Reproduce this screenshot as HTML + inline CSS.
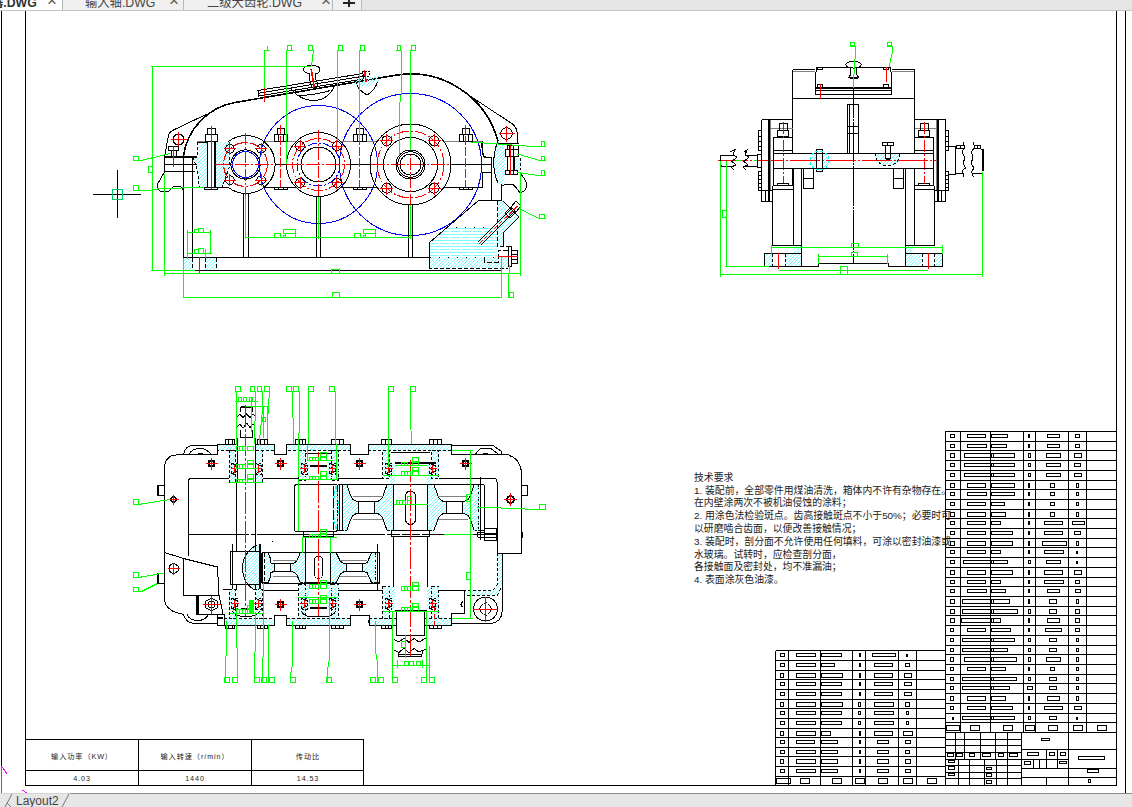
<!DOCTYPE html>
<html lang="zh"><head><meta charset="utf-8"><title>DWG Viewer</title>
<style>
html,body{margin:0;padding:0;background:#fff;overflow:hidden}
body{width:1132px;height:807px;position:relative;font-family:"Liberation Sans","Noto Sans CJK SC",sans-serif}
#tabs{position:absolute;left:0;top:0;width:1132px;height:10px;background:#e6e6e6;border-bottom:1px solid #c4c4c4;overflow:hidden}
.tab{position:absolute;top:0;height:10px;background:#f0f0f0;border-right:1px solid #b8b8b8;overflow:hidden;white-space:nowrap}
.tab span{position:absolute;top:-5px;font-size:12.3px;line-height:16px;color:#444}
.tab span.x{font-size:17px;top:-7px;color:#555}
.tab i{position:absolute;background:#222;display:block}
.tab.act{background:#fff}
.tab.act span.t{font-weight:bold;color:#333}
#bot{position:absolute;left:0;top:793px;width:1132px;height:14px;background:#e6e6e6;overflow:hidden}
#bot .ln{position:absolute;left:70px;top:0;width:1062px;height:1px;background:#8c8c8c}
#bot .ln0{position:absolute;left:0;top:0;width:70px;height:1px;background:#d4d4d4}
#bot .lay{position:absolute;left:16px;top:0px;font-size:12px;line-height:16px;color:#444}
svg{position:absolute;left:0;top:0}
svg text{font-family:"Liberation Sans","Noto Sans CJK SC",sans-serif}
</style></head><body>
<svg width="1132" height="807" viewBox="0 0 1132 807" fill="none" shape-rendering="crispEdges">
<defs>
<pattern id="h45" width="7" height="7" patternUnits="userSpaceOnUse" fill="#7ff"><rect x="0" y="6" width="1" height="1"/><rect x="1" y="5" width="1" height="1"/><rect x="2" y="4" width="1" height="1"/><rect x="3" y="3" width="1" height="1"/><rect x="4" y="2" width="1" height="1"/><rect x="5" y="1" width="1" height="1"/><rect x="6" y="0" width="1" height="1"/><rect x="4" y="6" width="1" height="1"/><rect x="5" y="5" width="1" height="1"/><rect x="6" y="4" width="1" height="1"/><rect x="0" y="3" width="1" height="1"/><rect x="1" y="2" width="1" height="1"/><rect x="2" y="1" width="1" height="1"/><rect x="3" y="0" width="1" height="1"/></pattern>
<pattern id="hoil" width="11" height="6" patternUnits="userSpaceOnUse"><path d="M0 0.5 H11 M0 3.5 H8.5" stroke="#7ff" stroke-width="1" shape-rendering="crispEdges"/></pattern>
</defs>
<g id="part_frame">
<line x1="1.5" y1="10" x2="1.5" y2="793" stroke="#000000"/>
<line x1="25.5" y1="10" x2="25.5" y2="785.5" stroke="#000000"/>
<line x1="1116.5" y1="10" x2="1116.5" y2="785.5" stroke="#000000"/>
<line x1="1125.5" y1="10" x2="1125.5" y2="793" stroke="#000000"/>
<line x1="25" y1="785.5" x2="1117" y2="785.5" stroke="#000000"/>
<line x1="1.5" y1="766" x2="1.5" y2="793" stroke="#ff00ff"/>
<line x1="1.5" y1="766" x2="7" y2="774" stroke="#ff00ff"/>
<line x1="22" y1="790" x2="27" y2="793" stroke="#ff00ff"/>
<line x1="93" y1="194.5" x2="141" y2="194.5" stroke="#000000"/>
<line x1="117.5" y1="170" x2="117.5" y2="218" stroke="#000000"/>
<rect x="112.5" y="189.5" width="10" height="10" stroke="#00cc66" fill="none"/>
<rect x="25.5" y="739.5" width="338.0" height="46.0" stroke="#000000" fill="none"/>
<line x1="25.5" y1="770.5" x2="363.5" y2="770.5" stroke="#000000"/>
<line x1="138.5" y1="739.5" x2="138.5" y2="785.5" stroke="#000000"/>
<line x1="251.5" y1="739.5" x2="251.5" y2="785.5" stroke="#000000"/>
<text x="82" y="758.5" font-size="7.2" text-anchor="middle" fill="#222" letter-spacing="0.9" shape-rendering="auto">输入功率（KW）</text>
<text x="195" y="758.5" font-size="7.2" text-anchor="middle" fill="#222" letter-spacing="0.9" shape-rendering="auto">输入转速（r/min）</text>
<text x="308" y="758.5" font-size="7.2" text-anchor="middle" fill="#222" letter-spacing="0.9" shape-rendering="auto">传动比</text>
<text x="82" y="781" font-size="7.2" text-anchor="middle" fill="#222" letter-spacing="0.9" shape-rendering="auto">4.03</text>
<text x="195" y="781" font-size="7.2" text-anchor="middle" fill="#222" letter-spacing="0.9" shape-rendering="auto">1440</text>
<text x="308" y="781" font-size="7.2" text-anchor="middle" fill="#222" letter-spacing="0.9" shape-rendering="auto">14.53</text>
<text x="694" y="480.9" font-size="9.85" text-anchor="start" fill="#1a1a1a" shape-rendering="auto" id="tq0">技术要求</text>
<text x="694" y="493.67" font-size="9.85" text-anchor="start" fill="#1a1a1a" shape-rendering="auto" id="tq1">1. 装配前，全部零件用煤油清洗，箱体内不许有杂物存在。</text>
<text x="694" y="506.44" font-size="9.85" text-anchor="start" fill="#1a1a1a" shape-rendering="auto" id="tq2">在内壁涂两次不被机油侵蚀的涂料；</text>
<text x="694" y="519.21" font-size="9.85" text-anchor="start" fill="#1a1a1a" shape-rendering="auto" id="tq3">2. 用涂色法检验斑点。齿高接触斑点不小于50%；必要时可</text>
<text x="694" y="531.98" font-size="9.85" text-anchor="start" fill="#1a1a1a" shape-rendering="auto" id="tq4">以研磨啮合齿面，以便改善接触情况；</text>
<text x="694" y="544.75" font-size="9.85" text-anchor="start" fill="#1a1a1a" shape-rendering="auto" id="tq5">3. 装配时，剖分面不允许使用任何填料，可涂以密封油漆或</text>
<text x="694" y="557.52" font-size="9.85" text-anchor="start" fill="#1a1a1a" shape-rendering="auto" id="tq6">水玻璃。试转时，应检查剖分面，</text>
<text x="694" y="570.29" font-size="9.85" text-anchor="start" fill="#1a1a1a" shape-rendering="auto" id="tq7">各接触面及密封处，均不准漏油；</text>
<text x="694" y="583.06" font-size="9.85" text-anchor="start" fill="#1a1a1a" shape-rendering="auto" id="tq8">4. 表面涂灰色油漆。</text>
</g>
<g id="part_front">
<path d="M198.5 141.5 L229 141.5 L229 168 L222 187.5 L200 187.5 C197 180 199 172 196 166 L193 157 L198.5 157 Z" stroke="none" fill="url(#h45)"/>
<rect x="208" y="141.5" width="7" height="46" fill="#fff"/>
<path d="M497.5 141.5 L503 143 L505 150 L505 175 L502 185.5 L498 183 C493 172 492 158 497.5 141.5 Z" stroke="none" fill="url(#h45)"/>
<rect x="515" y="157.5" width="5.5" height="12.5" stroke="none" fill="url(#h45)"/>
<rect x="184" y="258" width="8.5" height="12.5" stroke="none" fill="url(#h45)"/>
<rect x="206" y="258" width="10.5" height="12.5" stroke="none" fill="url(#h45)"/>
<path d="M429.5 257 L429.5 242.5 L447 227.5 L497 227.5 L497 257 Z" stroke="none" fill="url(#hoil)"/>
<path d="M429.5 257 L508 257 L508 268 L429.5 268 Z" stroke="none" fill="url(#h45)"/>
<path d="M497 201 L503 201 L519 217 L503 233 L503 246 L497 246 Z" stroke="none" fill="url(#h45)"/>
<circle cx="318.5" cy="164.5" r="59" stroke="#0000ff" fill="none"/>
<circle cx="410.5" cy="164.5" r="71" stroke="#0000ff" fill="none"/>
<circle cx="245.5" cy="164.5" r="13" stroke="#0000ff" fill="none"/>
<circle cx="318.5" cy="164.5" r="21.5" stroke="#0000ff" fill="none" stroke-dasharray="9 2 2 2"/>
<path d="M183.5 156 A63 63 0 0 1 235 102.5 L395.3 75.3 A90.5 90.5 0 0 1 498 141.5" stroke="#000000" fill="none" stroke-width="1.6"/>
<path d="M207 114 L173.5 130 Q169 132 168.3 136 L165.8 150.5 L164.5 157" stroke="#000000" fill="none"/>
<circle cx="178.5" cy="139.5" r="5.5" stroke="#000000" fill="none"/>
<line x1="170.5" y1="139.5" x2="186.5" y2="139.5" stroke="#ff0000"/>
<line x1="178.5" y1="131.5" x2="178.5" y2="147.5" stroke="#ff0000"/>
<path d="M468.5 95 L512.5 124 Q517.5 128 517.5 136 L518 143.5" stroke="#000000" fill="none"/>
<circle cx="506.5" cy="133.5" r="5.8" stroke="#000000" fill="none"/>
<line x1="498.5" y1="133.5" x2="514.5" y2="133.5" stroke="#ff0000"/>
<line x1="506.5" y1="125.5" x2="506.5" y2="141.5" stroke="#ff0000"/>
<path d="M482 141.5 L482.5 152 Q483 157.5 487 157.5 L492 157.5" stroke="#000000" fill="none" stroke-width="1.6"/>
<path d="M497.5 141.5 C492 158 493 172 498 183" stroke="#000000" fill="none"/>
<line x1="197" y1="141.5" x2="207" y2="141.5" stroke="#808080"/>
<line x1="263" y1="141.5" x2="296" y2="141.5" stroke="#808080"/>
<line x1="341" y1="141.5" x2="377" y2="141.5" stroke="#808080"/>
<line x1="444" y1="141.5" x2="482" y2="141.5" stroke="#808080"/>
<line x1="164.5" y1="164.5" x2="197" y2="164.5" stroke="#000000"/>
<line x1="275" y1="164.5" x2="285.5" y2="164.5" stroke="#000000"/>
<line x1="350" y1="164.5" x2="371" y2="164.5" stroke="#000000"/>
<line x1="452" y1="164.5" x2="492" y2="164.5" stroke="#000000"/>
<line x1="164.5" y1="157" x2="197" y2="157" stroke="#000000" stroke-width="1.6"/>
<line x1="197.5" y1="142" x2="197.5" y2="157" stroke="#000000" stroke-dasharray="3 2"/>
<line x1="197" y1="142" x2="207" y2="142" stroke="#000000"/>
<line x1="164.5" y1="171.5" x2="195" y2="171.5" stroke="#000000"/>
<line x1="164.5" y1="157" x2="164.5" y2="172" stroke="#000000"/>
<line x1="183.5" y1="157" x2="183.5" y2="257.5" stroke="#000000"/>
<line x1="192.5" y1="157" x2="192.5" y2="257.5" stroke="#000000"/>
<path d="M193 157 L196 166 C199 172 197 180 200 187.5" stroke="#000000" fill="none" stroke-dasharray="3 2"/>
<path d="M229 141.5 L229 168 L222 187.5" stroke="#000000" fill="none" stroke-dasharray="3 2"/>
<path d="M164.5 172 L157.5 184 Q156 190 161.5 191.5 L168.5 192 Q171 188 173 187 L179.5 186.5 Q183 187 183.5 192" stroke="#000000" fill="none"/>
<rect x="207.5" y="128" width="8.0" height="6" stroke="#000000" fill="none"/>
<rect x="205.5" y="134" width="12.0" height="7.5" stroke="#000000" fill="none"/>
<line x1="207.5" y1="141.5" x2="207.5" y2="187.5" stroke="#000000" stroke-width="1.6"/>
<line x1="215" y1="141.5" x2="215" y2="187.5" stroke="#000000" stroke-width="1.6"/>
<line x1="211.5" y1="126" x2="211.5" y2="189" stroke="#ff0000"/>
<rect x="204.5" y="187.5" width="13.0" height="2.0" stroke="#000000" fill="none"/>
<rect x="168.5" y="146.5" width="10.0" height="4.0" stroke="#000000" fill="none"/>
<line x1="171" y1="150.5" x2="171" y2="157" stroke="#000000"/>
<line x1="176" y1="150.5" x2="176" y2="157" stroke="#000000"/>
<line x1="173.5" y1="146" x2="173.5" y2="166.5" stroke="#ff0000"/>
<line x1="200" y1="187.5" x2="229" y2="187.5" stroke="#000000"/>
<line x1="263" y1="187.5" x2="296.5" y2="187.5" stroke="#000000"/>
<line x1="340.5" y1="187.5" x2="377" y2="187.5" stroke="#000000"/>
<line x1="444" y1="187.5" x2="482" y2="187.5" stroke="#000000"/>
<rect x="277.0" y="128" width="7.0" height="6" stroke="#000000" fill="none"/>
<rect x="274.0" y="134" width="13.0" height="7.5" stroke="#000000" fill="none"/>
<line x1="278.0" y1="134" x2="278.0" y2="141.5" stroke="#000000"/>
<line x1="283.0" y1="134" x2="283.0" y2="141.5" stroke="#000000"/>
<line x1="280.5" y1="125" x2="280.5" y2="187" stroke="#ff0000" stroke-dasharray="9 2"/>
<rect x="274.0" y="187.5" width="13.0" height="2.0" stroke="#000000" fill="none"/>
<line x1="278.0" y1="187.5" x2="278.0" y2="189.5" stroke="#000000"/>
<line x1="283.0" y1="187.5" x2="283.0" y2="189.5" stroke="#000000"/>
<rect x="356.0" y="128" width="7.0" height="6" stroke="#000000" fill="none"/>
<rect x="353.0" y="134" width="13.0" height="7.5" stroke="#000000" fill="none"/>
<line x1="357.0" y1="134" x2="357.0" y2="141.5" stroke="#000000"/>
<line x1="362.0" y1="134" x2="362.0" y2="141.5" stroke="#000000"/>
<line x1="359.5" y1="125" x2="359.5" y2="187" stroke="#ff0000" stroke-dasharray="9 2"/>
<rect x="353.0" y="187.5" width="13.0" height="2.0" stroke="#000000" fill="none"/>
<line x1="357.0" y1="187.5" x2="357.0" y2="189.5" stroke="#000000"/>
<line x1="362.0" y1="187.5" x2="362.0" y2="189.5" stroke="#000000"/>
<rect x="462.0" y="128" width="7.0" height="6" stroke="#000000" fill="none"/>
<rect x="459.0" y="134" width="13.0" height="7.5" stroke="#000000" fill="none"/>
<line x1="463.0" y1="134" x2="463.0" y2="141.5" stroke="#000000"/>
<line x1="468.0" y1="134" x2="468.0" y2="141.5" stroke="#000000"/>
<line x1="465.5" y1="125" x2="465.5" y2="187" stroke="#ff0000" stroke-dasharray="9 2"/>
<rect x="459.0" y="187.5" width="13.0" height="2.0" stroke="#000000" fill="none"/>
<line x1="463.0" y1="187.5" x2="463.0" y2="189.5" stroke="#000000"/>
<line x1="468.0" y1="187.5" x2="468.0" y2="189.5" stroke="#000000"/>
<path d="M228.5 141.5 A29 29 0 1 1 228.5 187.5" stroke="#000000" fill="none"/>
<circle cx="245.5" cy="164.5" r="22" stroke="#ff0000" fill="none" stroke-dasharray="12 2 2 2"/>
<circle cx="245.5" cy="164.5" r="14.6" stroke="#000000" fill="none"/>
<circle cx="229.9" cy="148.9" r="4.3" stroke="#000000" fill="none"/>
<line x1="224.1" y1="148.9" x2="235.70000000000002" y2="148.9" stroke="#ff0000"/>
<line x1="229.9" y1="143.1" x2="229.9" y2="154.70000000000002" stroke="#ff0000"/>
<circle cx="229.9" cy="180.1" r="4.3" stroke="#000000" fill="none"/>
<line x1="224.1" y1="180.1" x2="235.70000000000002" y2="180.1" stroke="#ff0000"/>
<line x1="229.9" y1="174.29999999999998" x2="229.9" y2="185.9" stroke="#ff0000"/>
<circle cx="261.1" cy="148.9" r="4.3" stroke="#000000" fill="none"/>
<line x1="255.3" y1="148.9" x2="266.90000000000003" y2="148.9" stroke="#ff0000"/>
<line x1="261.1" y1="143.1" x2="261.1" y2="154.70000000000002" stroke="#ff0000"/>
<circle cx="261.1" cy="180.1" r="4.3" stroke="#000000" fill="none"/>
<line x1="255.3" y1="180.1" x2="266.90000000000003" y2="180.1" stroke="#ff0000"/>
<line x1="261.1" y1="174.29999999999998" x2="261.1" y2="185.9" stroke="#ff0000"/>
<circle cx="318.5" cy="164.5" r="32" stroke="#000000" fill="none"/>
<circle cx="318.5" cy="164.5" r="26" stroke="#ff0000" fill="none" stroke-dasharray="12 2 2 2"/>
<circle cx="318.5" cy="164.5" r="17.5" stroke="#000000" fill="none"/>
<circle cx="300.1" cy="146.1" r="4.5" stroke="#000000" fill="none"/>
<line x1="294.1" y1="146.1" x2="306.1" y2="146.1" stroke="#ff0000"/>
<line x1="300.1" y1="140.1" x2="300.1" y2="152.1" stroke="#ff0000"/>
<circle cx="300.1" cy="182.9" r="4.5" stroke="#000000" fill="none"/>
<line x1="294.1" y1="182.9" x2="306.1" y2="182.9" stroke="#ff0000"/>
<line x1="300.1" y1="176.9" x2="300.1" y2="188.9" stroke="#ff0000"/>
<circle cx="336.9" cy="146.1" r="4.5" stroke="#000000" fill="none"/>
<line x1="330.9" y1="146.1" x2="342.9" y2="146.1" stroke="#ff0000"/>
<line x1="336.9" y1="140.1" x2="336.9" y2="152.1" stroke="#ff0000"/>
<circle cx="336.9" cy="182.9" r="4.5" stroke="#000000" fill="none"/>
<line x1="330.9" y1="182.9" x2="342.9" y2="182.9" stroke="#ff0000"/>
<line x1="336.9" y1="176.9" x2="336.9" y2="188.9" stroke="#ff0000"/>
<circle cx="410.5" cy="164.5" r="40.5" stroke="#000000" fill="none"/>
<circle cx="410.5" cy="164.5" r="33.5" stroke="#ff0000" fill="none" stroke-dasharray="12 2 2 2"/>
<circle cx="410.5" cy="164.5" r="27" stroke="#000000" fill="none"/>
<circle cx="386.8" cy="140.8" r="5" stroke="#000000" fill="none"/>
<line x1="380.3" y1="140.8" x2="393.3" y2="140.8" stroke="#ff0000"/>
<line x1="386.8" y1="134.3" x2="386.8" y2="147.3" stroke="#ff0000"/>
<circle cx="386.8" cy="188.2" r="5" stroke="#000000" fill="none"/>
<line x1="380.3" y1="188.2" x2="393.3" y2="188.2" stroke="#ff0000"/>
<line x1="386.8" y1="181.7" x2="386.8" y2="194.7" stroke="#ff0000"/>
<circle cx="434.2" cy="140.8" r="5" stroke="#000000" fill="none"/>
<line x1="427.7" y1="140.8" x2="440.7" y2="140.8" stroke="#ff0000"/>
<line x1="434.2" y1="134.3" x2="434.2" y2="147.3" stroke="#ff0000"/>
<circle cx="434.2" cy="188.2" r="5" stroke="#000000" fill="none"/>
<line x1="427.7" y1="188.2" x2="440.7" y2="188.2" stroke="#ff0000"/>
<line x1="434.2" y1="181.7" x2="434.2" y2="194.7" stroke="#ff0000"/>
<line x1="215" y1="164.5" x2="275" y2="164.5" stroke="#ff0000" stroke-dasharray="14 2 2 2"/>
<line x1="285.5" y1="164.5" x2="350" y2="164.5" stroke="#ff0000" stroke-dasharray="14 2 2 2"/>
<line x1="371" y1="164.5" x2="452" y2="164.5" stroke="#ff0000" stroke-dasharray="14 2 2 2"/>
<line x1="245.5" y1="133" x2="245.5" y2="196" stroke="#ff0000" stroke-dasharray="12 2 2 2"/>
<line x1="318.5" y1="130" x2="318.5" y2="197" stroke="#ff0000" stroke-dasharray="12 2 2 2"/>
<line x1="410.5" y1="122" x2="410.5" y2="206" stroke="#ff0000" stroke-dasharray="12 2 2 2"/>
<circle cx="410.5" cy="164.5" r="14.5" stroke="#000000" fill="none"/>
<circle cx="410.5" cy="164.5" r="12.8" stroke="#000000" fill="none"/>
<circle cx="410.5" cy="164.5" r="10.5" stroke="#000000" fill="none"/>
<line x1="410.5" y1="146" x2="410.5" y2="152" stroke="#000000"/>
<line x1="243.0" y1="193.0" x2="243.0" y2="257.5" stroke="#000000"/>
<line x1="248.0" y1="193.0" x2="248.0" y2="257.5" stroke="#000000"/>
<line x1="316.5" y1="196.0" x2="316.5" y2="257.5" stroke="#000000"/>
<line x1="320.5" y1="196.0" x2="320.5" y2="257.5" stroke="#000000"/>
<line x1="408.5" y1="204.5" x2="408.5" y2="257.5" stroke="#000000"/>
<line x1="412.5" y1="204.5" x2="412.5" y2="257.5" stroke="#000000"/>
<line x1="183.5" y1="257.5" x2="429.5" y2="257.5" stroke="#000000" stroke-width="1.6"/>
<line x1="183.5" y1="270.5" x2="501.5" y2="270.5" stroke="#000000" stroke-width="1.6"/>
<line x1="183.5" y1="257.5" x2="183.5" y2="270.5" stroke="#000000"/>
<line x1="192.5" y1="257.5" x2="192.5" y2="270.5" stroke="#000000" stroke-dasharray="4 2"/>
<line x1="205.5" y1="257.5" x2="205.5" y2="270.5" stroke="#000000" stroke-dasharray="4 2"/>
<line x1="216.5" y1="257.5" x2="216.5" y2="270.5" stroke="#000000" stroke-dasharray="4 2"/>
<line x1="199.5" y1="257" x2="199.5" y2="273" stroke="#ff0000"/>
<line x1="482" y1="172" x2="482" y2="187.5" stroke="#000000"/>
<line x1="482" y1="172" x2="492" y2="172" stroke="#000000"/>
<line x1="491.5" y1="157.5" x2="491.5" y2="200.5" stroke="#000000"/>
<line x1="501.5" y1="184" x2="501.5" y2="200.5" stroke="#000000"/>
<path d="M502 185.5 Q506 184 512.5 184 Q516 187 519.5 192 Q522 193 524.5 190.5 Q527.5 187 526.5 182.5 Q524 178 521 174" stroke="#000000" fill="none"/>
<path d="M429.5 268 L429.5 242.5 L478.5 200.5 L501.5 200.5" stroke="#000000" fill="none"/>
<path d="M429.5 242.5 L429.5 268 L508 268" stroke="#000000" fill="none" stroke-dasharray="4 2"/>
<line x1="447" y1="227.5" x2="497" y2="227.5" stroke="#000000" stroke-dasharray="1 8"/>
<line x1="429.5" y1="257" x2="497" y2="257" stroke="#000000" stroke-dasharray="1 8"/>
<path d="M497 201 L497 246 L508 246" stroke="#000000" fill="none" stroke-dasharray="4 2"/>
<path d="M503 201 L519 217 L503 233 L503 246" stroke="#000000" fill="none"/>
<line x1="479" y1="244" x2="519.5" y2="204" stroke="#ff0000" stroke-dasharray="5 2"/>
<line x1="477.5" y1="242.5" x2="512" y2="208" stroke="#000000"/>
<line x1="480.5" y1="245.5" x2="515" y2="211" stroke="#000000"/>
<path d="M505 213 L511 207 L516 212 L510 218 Z" stroke="#000000" fill="none"/>
<path d="M511 207 L516 201 L521 206 L516 212 Z" stroke="#000000" fill="none"/>
<rect x="508" y="246" width="3.5" height="20.5" stroke="#000000" fill="none"/>
<rect x="511.5" y="250" width="6.0" height="13" stroke="#000000" fill="none"/>
<line x1="511.5" y1="254" x2="517.5" y2="254" stroke="#000000"/>
<line x1="511.5" y1="259" x2="517.5" y2="259" stroke="#000000"/>
<path d="M508 250 L498 250 L498 262 L484 262 L484 257" stroke="#000000" fill="none" stroke-dasharray="5 2"/>
<line x1="498" y1="256.5" x2="518" y2="256.5" stroke="#ff0000"/>
<rect x="507" y="145" width="11.5" height="4" stroke="#000000" fill="none"/>
<rect x="505" y="149" width="13.5" height="7.5" stroke="#000000" fill="none"/>
<line x1="509.5" y1="145" x2="509.5" y2="156.5" stroke="#000000"/>
<line x1="513" y1="145" x2="513" y2="156.5" stroke="#000000"/>
<line x1="507.5" y1="156.5" x2="507.5" y2="170.5" stroke="#000000" stroke-width="1.6"/>
<line x1="514" y1="156.5" x2="514" y2="170.5" stroke="#000000" stroke-width="1.6"/>
<rect x="505" y="170.5" width="12" height="3.5" stroke="#000000" fill="none"/>
<line x1="509" y1="170.5" x2="509" y2="174" stroke="#000000"/>
<line x1="513" y1="170.5" x2="513" y2="174" stroke="#000000"/>
<line x1="510.5" y1="144" x2="510.5" y2="175" stroke="#ff0000"/>
<line x1="498" y1="143.5" x2="518.5" y2="143.5" stroke="#000000"/>
<line x1="520.5" y1="157.5" x2="520.5" y2="170" stroke="#000000" stroke-dasharray="3 2"/>
<path d="M258 90.5 L363 73.5 L363.5 79 L258.5 96 Z" stroke="#000000" fill="none"/>
<line x1="258.5" y1="93.2" x2="363.5" y2="76.2" stroke="#000000"/>
<path d="M291 88.5 Q296 96 306 99.5 Q315 101.5 322 99 Q331 95 335.5 84.5" stroke="#000000" fill="none"/>
<path d="M299.5 95.5 Q315 95 330.5 90.5" stroke="#000000" fill="none"/>
<path d="M303.5 69.5 Q303.5 65.5 311.5 65.5 Q320 65.5 320 69.5 Q320 73 316 73.5 L315.5 79 L317.5 83 L317 87.5 L311.5 88 L311 84 L309.5 80 L309.5 73.5 Q303.5 73 303.5 69.5 Z" stroke="#000000" fill="none"/>
<line x1="311.2" y1="69" x2="314.3" y2="87.5" stroke="#ff0000" stroke-width="1.6"/>
<path d="M356.5 83.5 Q358 90 367 95 Q375 91 377.5 81.5" stroke="#000000" fill="none"/>
<path d="M354 80 L379 75.5 L379 81 L368 86 L356 85 Z" stroke="none" fill="url(#h45)"/>
<rect x="362" y="71" width="7" height="5" stroke="#000000" fill="none" stroke-dasharray="2 1"/>
<line x1="364.4" y1="70.5" x2="366.2" y2="82" stroke="#ff0000" stroke-width="1.6"/>
<line x1="264.5" y1="88" x2="264.5" y2="102" stroke="#ff0000"/>
<line x1="150.5" y1="66.5" x2="311" y2="66.5" stroke="#00ff00"/>
<line x1="152.5" y1="66.5" x2="152.5" y2="270.5" stroke="#00ff00"/>
<line x1="150.5" y1="270.5" x2="195" y2="270.5" stroke="#00ff00"/>
<rect x="148.5" y="166" width="3.5" height="6.5" stroke="#00ff00" fill="none"/>
<line x1="164.5" y1="174" x2="164.5" y2="275.5" stroke="#00ff00"/>
<line x1="164.5" y1="273.5" x2="520.5" y2="273.5" stroke="#00ff00"/>
<line x1="520.5" y1="173" x2="520.5" y2="275.5" stroke="#00ff00"/>
<line x1="183.5" y1="257.5" x2="183.5" y2="298" stroke="#00ff00"/>
<line x1="183.5" y1="297.5" x2="501.5" y2="297.5" stroke="#00ff00"/>
<line x1="501.5" y1="256.5" x2="501.5" y2="298" stroke="#00ff00"/>
<rect x="331.5" y="269.5" width="8.0" height="4.0" stroke="#00ff00" fill="none"/>
<rect x="332.5" y="292.5" width="7.0" height="5.0" stroke="#00ff00" fill="none"/>
<line x1="245.5" y1="196" x2="245.5" y2="238.5" stroke="#00ff00"/>
<line x1="318.5" y1="197" x2="318.5" y2="238.5" stroke="#00ff00"/>
<line x1="410.5" y1="205" x2="410.5" y2="238.5" stroke="#00ff00"/>
<line x1="245.5" y1="237.5" x2="410.5" y2="237.5" stroke="#00ff00"/>
<rect x="274.5" y="233.5" width="6.0" height="4.0" stroke="#00ff00" fill="none"/>
<rect x="283.5" y="229.5" width="12.0" height="4.0" stroke="#00ff00" fill="none"/>
<rect x="285.5" y="233.5" width="10.0" height="4.0" stroke="#00ff00" fill="none"/>
<rect x="283.5" y="235.5" width="2.0" height="2.0" stroke="#00ff00" fill="none"/>
<rect x="354.5" y="233.5" width="6.0" height="4.0" stroke="#00ff00" fill="none"/>
<rect x="363.5" y="229.5" width="12.0" height="4.0" stroke="#00ff00" fill="none"/>
<rect x="365.5" y="233.5" width="10.0" height="4.0" stroke="#00ff00" fill="none"/>
<rect x="363.5" y="235.5" width="2.0" height="2.0" stroke="#00ff00" fill="none"/>
<line x1="187.5" y1="230" x2="187.5" y2="259" stroke="#00ff00"/>
<line x1="210.5" y1="230" x2="210.5" y2="254" stroke="#00ff00"/>
<line x1="187.5" y1="232.5" x2="210.5" y2="232.5" stroke="#00ff00"/>
<line x1="186.5" y1="253.5" x2="212" y2="253.5" stroke="#00ff00"/>
<line x1="205.5" y1="249" x2="205.5" y2="258" stroke="#00ff00"/>
<rect x="194.5" y="229.5" width="4.0" height="3.0" stroke="#00ff00" fill="none"/>
<rect x="198.5" y="228.5" width="5.0" height="4.0" stroke="#00ff00" fill="none"/>
<rect x="194.5" y="249.5" width="4.0" height="4.0" stroke="#00ff00" fill="none"/>
<rect x="198.5" y="248.5" width="5.0" height="5.0" stroke="#00ff00" fill="none"/>
<path d="M264.5 88 L264.5 50.5 L270 50.5" stroke="#00ff00" fill="none"/>
<line x1="267" y1="45.5" x2="267" y2="50.5" stroke="#00ff00"/>
<path d="M286.5 164 L286.5 50.5 L292.5 50.5" stroke="#00ff00" fill="none"/>
<rect x="287.5" y="45.5" width="4" height="5" stroke="#00ff00" fill="none"/>
<path d="M337.5 141 L337.5 50.5 L343.5 50.5" stroke="#00ff00" fill="none"/>
<rect x="338.5" y="45.5" width="4" height="5" stroke="#00ff00" fill="none"/>
<path d="M359.5 141 L359.5 50.5 L365.5 50.5" stroke="#00ff00" fill="none"/>
<rect x="360.5" y="45.5" width="4" height="5" stroke="#00ff00" fill="none"/>
<path d="M311.5 66 L313 54 L313 50.5 L308 50.5" stroke="#00ff00" fill="none"/>
<rect x="308.5" y="45.5" width="4" height="5" stroke="#00ff00" fill="none"/>
<path d="M399.5 155 L400 102 L401.5 92 L401.5 50.5 L396 50.5" stroke="#00ff00" fill="none"/>
<rect x="397" y="45.5" width="3" height="5" stroke="#00ff00" fill="none"/>
<path d="M410.5 150 L410.5 50.5 L416 50.5" stroke="#00ff00" fill="none"/>
<rect x="411.5" y="45.5" width="4" height="5" stroke="#00ff00" fill="none"/>
<rect x="133.5" y="156.5" width="5.0" height="4.0" stroke="#00ff00" fill="none"/>
<path d="M133.5 160.5 L139 161 L170.5 153.5" stroke="#00ff00" fill="none"/>
<rect x="133.5" y="185.5" width="5.0" height="5.0" stroke="#00ff00" fill="none"/>
<path d="M133.5 190.5 L150 190.5 L160 188.5 L204 187.5" stroke="#00ff00" fill="none"/>
<rect x="541.5" y="141.5" width="2.5" height="4.5" stroke="#00ff00" fill="none"/>
<path d="M470.5 142 L533 146.5 L546 146.5" stroke="#00ff00" fill="none"/>
<rect x="541.5" y="156" width="2.5" height="4.5" stroke="#00ff00" fill="none"/>
<path d="M517.5 154 L540 160.5 L546 160.5" stroke="#00ff00" fill="none"/>
<rect x="541.5" y="170.5" width="2.5" height="5.0" stroke="#00ff00" fill="none"/>
<path d="M517.5 172.5 L538 175.5 L546 175.5" stroke="#00ff00" fill="none"/>
<rect x="539.5" y="214.5" width="5.0" height="4.0" stroke="#00ff00" fill="none"/>
<path d="M519 208.5 L539 218.5 L546 218.5" stroke="#00ff00" fill="none"/>
<rect x="509.5" y="292.5" width="4.0" height="4.5" stroke="#00ff00" fill="none"/>
<path d="M509.5 265.5 L508.5 282 L508.5 297 L513.5 297" stroke="#00ff00" fill="none"/>
</g>
<g id="part_side">
<clipPath id="cpin"><circle cx="819.5" cy="160.5" r="9.5"/></clipPath>
<rect x="809" y="150" width="21" height="21.5" stroke="none" fill="url(#h45)" clip-path="url(#cpin)"/>
<rect x="816.5" y="149.5" width="6.0" height="22.0" stroke="none" fill="#fff"/>
<path d="M875 153.5 L900 153.5 A12.5 12.5 0 0 1 875 153.5 Z" stroke="none" fill="url(#h45)"/>
<rect x="885.5" y="145" width="4.5" height="14" stroke="none" fill="#fff"/>
<rect x="764.5" y="253.5" width="8.0" height="13.0" stroke="none" fill="url(#h45)"/>
<path d="M785 266.5 L785 253.5 L793 253.5 L793 245.5 L801.5 245.5 L801.5 266.5 Z" stroke="none" fill="url(#h45)"/>
<path d="M904.5 266.5 L904.5 245.5 L913 245.5 L913 253.5 L921 253.5 L921 266.5 Z" stroke="none" fill="url(#h45)"/>
<rect x="933.5" y="253.5" width="8.5" height="13.0" stroke="none" fill="url(#h45)"/>
<line x1="792.5" y1="69.5" x2="792.5" y2="153" stroke="#000000" stroke-width="1.6"/>
<line x1="914.5" y1="69.5" x2="914.5" y2="153" stroke="#000000" stroke-width="1.6"/>
<line x1="792.5" y1="69.5" x2="815" y2="69.5" stroke="#000000"/>
<line x1="892" y1="69.5" x2="914.5" y2="69.5" stroke="#000000"/>
<line x1="793" y1="71.5" x2="815" y2="71.5" stroke="#808080"/>
<line x1="892" y1="71.5" x2="914" y2="71.5" stroke="#808080"/>
<line x1="792.5" y1="98.5" x2="914.5" y2="98.5" stroke="#000000"/>
<path d="M815.5 94.5 L815.5 76 L816.5 67.5 L890.5 67.5 L891.5 76 L891.5 94.5 Z" stroke="#000000" fill="none"/>
<line x1="815.5" y1="88" x2="891.5" y2="88" stroke="#000000" stroke-width="1.6"/>
<line x1="815.5" y1="90.5" x2="891.5" y2="90.5" stroke="#000000"/>
<rect x="817.0" y="67" width="5.0" height="2" stroke="#000000" fill="none"/>
<rect x="817.0" y="84" width="5.0" height="3" stroke="#000000" fill="none"/>
<rect x="883.0" y="67" width="5.0" height="2" stroke="#000000" fill="none"/>
<rect x="883.0" y="84" width="5.0" height="3" stroke="#000000" fill="none"/>
<line x1="820.5" y1="84" x2="820.5" y2="98.5" stroke="#ff0000"/>
<line x1="886.5" y1="67" x2="886.5" y2="82" stroke="#ff0000"/>
<ellipse cx="853.5" cy="64.7" rx="7.7" ry="3.3" stroke="#000" fill="#fff"/>
<path d="M850 68 Q852.5 72 849 77.5 L858.5 77.5 Q855 72 857 68" stroke="#000000" fill="none"/>
<line x1="850" y1="78.5" x2="858" y2="78.5" stroke="#000000"/>
<line x1="853.5" y1="78" x2="853.5" y2="263.5" stroke="#000000" stroke-dasharray="40 1 2 1"/>
<rect x="847.5" y="104.5" width="11.0" height="48.5" stroke="#000000" fill="none"/>
<line x1="849.5" y1="104.5" x2="849.5" y2="153" stroke="#000000"/>
<line x1="847.5" y1="126.5" x2="858.5" y2="126.5" stroke="#000000"/>
<line x1="847.5" y1="133.5" x2="858.5" y2="133.5" stroke="#000000"/>
<line x1="773.5" y1="153" x2="933.5" y2="153" stroke="#000000"/>
<line x1="773.5" y1="168" x2="933.5" y2="168" stroke="#000000"/>
<line x1="718" y1="160.5" x2="937" y2="160.5" stroke="#ff0000" stroke-dasharray="30 2 2 2"/>
<rect x="816.5" y="149.5" width="6.0" height="22.0" stroke="#000000" fill="none"/>
<line x1="816.5" y1="149.5" x2="822.5" y2="149.5" stroke="#000000" stroke-width="1.6"/>
<circle cx="819.5" cy="160.5" r="9.5" stroke="#00ffff" fill="none" stroke-dasharray="3 2"/>
<rect x="882.5" y="142.5" width="10.5" height="2.5" stroke="#000000" fill="none"/>
<line x1="885.5" y1="145" x2="885.5" y2="159" stroke="#000000"/>
<line x1="890" y1="145" x2="890" y2="159" stroke="#000000"/>
<line x1="885.5" y1="159" x2="890" y2="159" stroke="#000000" stroke-width="1.6"/>
<line x1="887.5" y1="142.5" x2="887.5" y2="145" stroke="#000000"/>
<path d="M875 153.5 A12.5 12.5 0 0 0 900 153.5" stroke="#000000" fill="none" stroke-dasharray="3 2"/>
<line x1="792.5" y1="119.5" x2="761.5" y2="119.5" stroke="#000000"/>
<line x1="792.5" y1="128.5" x2="769.0" y2="128.5" stroke="#808080"/>
<line x1="761.5" y1="119.5" x2="761.5" y2="190" stroke="#000000"/>
<line x1="769.0" y1="119.5" x2="769.0" y2="201.5" stroke="#000000" stroke-width="1.6"/>
<line x1="770.0" y1="119.5" x2="770.0" y2="190" stroke="#808080"/>
<rect x="758.5" y="130.5" width="3.0" height="19.5" stroke="#000000" fill="none"/>
<line x1="761.5" y1="136" x2="758.5" y2="136" stroke="#000000"/>
<line x1="761.5" y1="141" x2="758.5" y2="141" stroke="#000000"/>
<line x1="761.5" y1="146" x2="758.5" y2="146" stroke="#000000"/>
<rect x="758.5" y="171.5" width="3.0" height="18.5" stroke="#000000" fill="none"/>
<line x1="761.5" y1="175" x2="758.5" y2="175" stroke="#000000"/>
<line x1="761.5" y1="179" x2="758.5" y2="179" stroke="#000000"/>
<line x1="761.5" y1="183" x2="758.5" y2="183" stroke="#000000"/>
<line x1="761.5" y1="187" x2="758.5" y2="187" stroke="#000000"/>
<rect x="761.5" y="190" width="11.0" height="11.5" stroke="#000000" fill="none"/>
<line x1="765.5" y1="190" x2="765.5" y2="201.5" stroke="#000000"/>
<rect x="779.0" y="123.5" width="8.0" height="7.0" stroke="#000000" fill="none"/>
<line x1="780.0" y1="123" x2="786.0" y2="123" stroke="#000000"/>
<rect x="777.5" y="130.5" width="11.0" height="6.0" stroke="#000000" fill="none"/>
<rect x="773.5" y="137.5" width="19.0" height="15.5" stroke="#000000" fill="none"/>
<line x1="792.5" y1="150.5" x2="773.5" y2="150.5" stroke="#000000"/>
<line x1="783.0" y1="121.5" x2="783.0" y2="184" stroke="#ff0000" stroke-dasharray="12 2 2 2"/>
<rect x="773.5" y="168" width="19.0" height="17.5" stroke="#000000" fill="none"/>
<rect x="777.5" y="183.5" width="11.0" height="2.0" stroke="#000000" fill="none"/>
<line x1="773.5" y1="153" x2="773.5" y2="168" stroke="#000000"/>
<line x1="792.5" y1="189.5" x2="772.5" y2="189.5" stroke="#000000"/>
<line x1="772.5" y1="185.5" x2="772.5" y2="245.5" stroke="#000000"/>
<line x1="793.0" y1="168" x2="793.0" y2="245.5" stroke="#000000"/>
<line x1="793.0" y1="245.5" x2="772.5" y2="245.5" stroke="#000000"/>
<line x1="801.5" y1="168" x2="801.5" y2="266.5" stroke="#000000"/>
<rect x="803.5" y="168" width="10.0" height="20.5" stroke="#000000" fill="none"/>
<line x1="813.5" y1="178.5" x2="803.5" y2="178.5" stroke="#000000"/>
<path d="M801.5 253.5 L764.5 253.5 L764.5 266.5 L818.5 266.5 L818.5 263.5" stroke="#000000" fill="none"/>
<path d="M801.5 245.5 L793.0 245.5" stroke="#000000" fill="none"/>
<line x1="772.5" y1="253.5" x2="772.5" y2="266.5" stroke="#000000" stroke-dasharray="3 2"/>
<line x1="785.0" y1="253.5" x2="785.0" y2="266.5" stroke="#000000" stroke-dasharray="3 2"/>
<line x1="778.5" y1="253" x2="778.5" y2="269" stroke="#ff0000"/>
<line x1="914.5" y1="119.5" x2="945.5" y2="119.5" stroke="#000000"/>
<line x1="914.5" y1="128.5" x2="938.0" y2="128.5" stroke="#808080"/>
<line x1="945.5" y1="119.5" x2="945.5" y2="190" stroke="#000000"/>
<line x1="938.0" y1="119.5" x2="938.0" y2="201.5" stroke="#000000" stroke-width="1.6"/>
<line x1="936.5" y1="119.5" x2="936.5" y2="190" stroke="#808080"/>
<rect x="945.5" y="130.5" width="3.0" height="19.5" stroke="#000000" fill="none"/>
<line x1="945.5" y1="136" x2="948.5" y2="136" stroke="#000000"/>
<line x1="945.5" y1="141" x2="948.5" y2="141" stroke="#000000"/>
<line x1="945.5" y1="146" x2="948.5" y2="146" stroke="#000000"/>
<rect x="945.5" y="171.5" width="3.0" height="18.5" stroke="#000000" fill="none"/>
<line x1="945.5" y1="175" x2="948.5" y2="175" stroke="#000000"/>
<line x1="945.5" y1="179" x2="948.5" y2="179" stroke="#000000"/>
<line x1="945.5" y1="183" x2="948.5" y2="183" stroke="#000000"/>
<line x1="945.5" y1="187" x2="948.5" y2="187" stroke="#000000"/>
<rect x="934.5" y="190" width="11.0" height="11.5" stroke="#000000" fill="none"/>
<line x1="941.5" y1="190" x2="941.5" y2="201.5" stroke="#000000"/>
<rect x="920.0" y="123.5" width="8.0" height="7.0" stroke="#000000" fill="none"/>
<line x1="921.0" y1="123" x2="927.0" y2="123" stroke="#000000"/>
<rect x="918.5" y="130.5" width="11.0" height="6.0" stroke="#000000" fill="none"/>
<rect x="914.5" y="137.5" width="19.0" height="15.5" stroke="#000000" fill="none"/>
<line x1="914.5" y1="150.5" x2="933.5" y2="150.5" stroke="#000000"/>
<line x1="924.0" y1="121.5" x2="924.0" y2="184" stroke="#ff0000" stroke-dasharray="12 2 2 2"/>
<rect x="914.5" y="168" width="19.0" height="17.5" stroke="#000000" fill="none"/>
<rect x="918.5" y="183.5" width="11.0" height="2.0" stroke="#000000" fill="none"/>
<line x1="933.5" y1="153" x2="933.5" y2="168" stroke="#000000"/>
<line x1="914.5" y1="189.5" x2="934.5" y2="189.5" stroke="#000000"/>
<line x1="934.5" y1="185.5" x2="934.5" y2="245.5" stroke="#000000"/>
<line x1="914.0" y1="168" x2="914.0" y2="245.5" stroke="#000000"/>
<line x1="914.0" y1="245.5" x2="934.5" y2="245.5" stroke="#000000"/>
<line x1="905.5" y1="168" x2="905.5" y2="266.5" stroke="#000000"/>
<rect x="893.5" y="168" width="10.0" height="20.5" stroke="#000000" fill="none"/>
<line x1="893.5" y1="178.5" x2="903.5" y2="178.5" stroke="#000000"/>
<path d="M905.5 253.5 L942.5 253.5 L942.5 266.5 L888.5 266.5 L888.5 263.5" stroke="#000000" fill="none"/>
<path d="M905.5 245.5 L914.0 245.5" stroke="#000000" fill="none"/>
<line x1="934.5" y1="253.5" x2="934.5" y2="266.5" stroke="#000000" stroke-dasharray="3 2"/>
<line x1="922.0" y1="253.5" x2="922.0" y2="266.5" stroke="#000000" stroke-dasharray="3 2"/>
<line x1="928.5" y1="253" x2="928.5" y2="269" stroke="#ff0000"/>
<line x1="818.5" y1="263.5" x2="888.5" y2="263.5" stroke="#000000"/>
<line x1="801.5" y1="168" x2="905" y2="168" stroke="#000000"/>
<rect x="757.5" y="154.5" width="4.0" height="12.5" stroke="#000000" fill="none"/>
<path d="M733 155.5 L721 155.5 L720.5 157 L720.5 164.5 L721.5 166 L733 166" stroke="#000000" fill="none"/>
<path d="M730 152 L735 149.5 L733 155 L737 157 L732 161.5 L736 165 L731 167 L734 170" stroke="#000000" fill="none"/>
<path d="M744 152 L747 150 L745 155 L749 157 L744 161.5 L748 165 L743 167 L746 170" stroke="#000000" fill="none"/>
<line x1="746" y1="155.5" x2="757.5" y2="155.5" stroke="#000000"/>
<line x1="746" y1="166" x2="757.5" y2="166" stroke="#000000"/>
<path d="M947.5 146.5 L955 146.5 L955 174.5 L947.5 174.5" stroke="#000000" fill="none"/>
<rect x="956.5" y="145.5" width="8.0" height="3.0" stroke="#000000" fill="none"/>
<rect x="974.5" y="145.5" width="5.5" height="3.0" stroke="#000000" fill="none"/>
<line x1="960.5" y1="145.5" x2="960.5" y2="148.5" stroke="#000000"/>
<line x1="977.5" y1="145.5" x2="977.5" y2="148.5" stroke="#000000"/>
<line x1="955" y1="173.5" x2="963.5" y2="173.5" stroke="#000000"/>
<line x1="973" y1="173.5" x2="982" y2="173.5" stroke="#000000"/>
<path d="M963.5 142 L964.5 147 L962 152 L965 158 L963 163 L965.5 168 L962 171 L964 177" stroke="#000000" fill="none"/>
<path d="M973.5 142 L974.5 147 L971.5 152 L973 158 L971 163 L974 168 L971.5 172 L973.5 177" stroke="#000000" fill="none"/>
<path d="M980 148.5 L982 149.5" stroke="#000000" fill="none"/>
<line x1="982.5" y1="149" x2="982.5" y2="171" stroke="#000000" stroke-width="2"/>
<line x1="720.5" y1="160.5" x2="720.5" y2="276.5" stroke="#00ff00"/>
<line x1="726.5" y1="160.5" x2="726.5" y2="266" stroke="#00ff00"/>
<line x1="724.5" y1="266.5" x2="769" y2="266.5" stroke="#00ff00"/>
<line x1="720.5" y1="274.5" x2="982.5" y2="274.5" stroke="#00ff00"/>
<line x1="982.5" y1="171.5" x2="982.5" y2="276.5" stroke="#00ff00"/>
<line x1="778.5" y1="270.5" x2="927.5" y2="270.5" stroke="#00ff00"/>
<line x1="771.5" y1="247.5" x2="942" y2="247.5" stroke="#00ff00"/>
<line x1="771.5" y1="245" x2="771.5" y2="253.5" stroke="#00ff00"/>
<line x1="942" y1="245" x2="942" y2="253.5" stroke="#00ff00"/>
<line x1="818.5" y1="256.5" x2="887.5" y2="256.5" stroke="#00ff00"/>
<line x1="818.5" y1="254" x2="818.5" y2="263.5" stroke="#00ff00"/>
<line x1="887.5" y1="254" x2="887.5" y2="263.5" stroke="#00ff00"/>
<rect x="851.5" y="243.5" width="7.0" height="4.0" stroke="#00ff00" fill="none"/>
<rect x="851.5" y="252.5" width="6.0" height="4.0" stroke="#00ff00" fill="none"/>
<rect x="840.5" y="266.5" width="7.0" height="8.0" stroke="#00ff00" fill="none"/>
<rect x="722.5" y="210.5" width="3.5" height="7.0" stroke="#00ff00" fill="none"/>
<line x1="736" y1="160.5" x2="757" y2="160.5" stroke="#00ff00" stroke-dasharray="6 12"/>
<rect x="850" y="42" width="4" height="3.5" stroke="#00ff00" fill="none"/>
<path d="M849.5 46 L855.5 46 L855.5 52 L853 88.5" stroke="#00ff00" fill="none"/>
<rect x="887" y="42" width="4" height="3.5" stroke="#00ff00" fill="none"/>
<path d="M886.5 46 L892.5 46 L892.5 52 L889 67" stroke="#00ff00" fill="none"/>
</g>
<g id="part_plan">
<path d="M217 444.0 L274.5 444.0 L274.5 450.5 L217 450.5 Z" stroke="none" fill="url(#h45)"/>
<path d="M217 444.0 L274.5 444.0 L274.5 450.5 L217 450.5 Z" stroke="#000000" fill="none" stroke-dasharray="3 2"/>
<path d="M224 618 L274.5 618 L274.5 625.0 L224 625.0 Z" stroke="none" fill="url(#h45)"/>
<path d="M224 618 L274.5 618 L274.5 625.0 L224 625.0 Z" stroke="#000000" fill="none" stroke-dasharray="3 2"/>
<path d="M286.5 444.0 L350.5 444.0 L350.5 450.5 L286.5 450.5 Z" stroke="none" fill="url(#h45)"/>
<path d="M286.5 444.0 L350.5 444.0 L350.5 450.5 L286.5 450.5 Z" stroke="#000000" fill="none" stroke-dasharray="3 2"/>
<path d="M286.5 618 L350.5 618 L350.5 625.0 L286.5 625.0 Z" stroke="none" fill="url(#h45)"/>
<path d="M286.5 618 L350.5 618 L350.5 625.0 L286.5 625.0 Z" stroke="#000000" fill="none" stroke-dasharray="3 2"/>
<path d="M368.5 444.0 L451.5 444.0 L451.5 450.5 L368.5 450.5 Z" stroke="none" fill="url(#h45)"/>
<path d="M368.5 444.0 L451.5 444.0 L451.5 450.5 L368.5 450.5 Z" stroke="#000000" fill="none" stroke-dasharray="3 2"/>
<path d="M368.5 618 L451.5 618 L451.5 625.0 L368.5 625.0 Z" stroke="none" fill="url(#h45)"/>
<path d="M368.5 618 L451.5 618 L451.5 625.0 L368.5 625.0 Z" stroke="#000000" fill="none" stroke-dasharray="3 2"/>
<path d="M229.0 450.5 L235.5 450.5 L235.5 482.5 L229.0 482.5 Z" stroke="none" fill="url(#h45)"/>
<path d="M229.0 450.5 L235.5 450.5 L235.5 482.5 L229.0 482.5 Z" stroke="#000000" fill="none" stroke-dasharray="3 2"/>
<path d="M255.5 450.5 L262.0 450.5 L262.0 482.5 L255.5 482.5 Z" stroke="none" fill="url(#h45)"/>
<path d="M255.5 450.5 L262.0 450.5 L262.0 482.5 L255.5 482.5 Z" stroke="#000000" fill="none" stroke-dasharray="3 2"/>
<path d="M229.0 589 L235.5 589 L235.5 618 L229.0 618 Z" stroke="none" fill="url(#h45)"/>
<path d="M229.0 589 L235.5 589 L235.5 618 L229.0 618 Z" stroke="#000000" fill="none" stroke-dasharray="3 2"/>
<path d="M255.5 589 L262.0 589 L262.0 618 L255.5 618 Z" stroke="none" fill="url(#h45)"/>
<path d="M255.5 589 L262.0 589 L262.0 618 L255.5 618 Z" stroke="#000000" fill="none" stroke-dasharray="3 2"/>
<path d="M298.5 450.5 L305.5 450.5 L305.5 480 L298.5 480 Z" stroke="none" fill="url(#h45)"/>
<path d="M298.5 450.5 L305.5 450.5 L305.5 480 L298.5 480 Z" stroke="#000000" fill="none" stroke-dasharray="3 2"/>
<path d="M331.5 450.5 L338.5 450.5 L338.5 480 L331.5 480 Z" stroke="none" fill="url(#h45)"/>
<path d="M331.5 450.5 L338.5 450.5 L338.5 480 L331.5 480 Z" stroke="#000000" fill="none" stroke-dasharray="3 2"/>
<path d="M298.5 584.5 L305.5 584.5 L305.5 618 L298.5 618 Z" stroke="none" fill="url(#h45)"/>
<path d="M298.5 584.5 L305.5 584.5 L305.5 618 L298.5 618 Z" stroke="#000000" fill="none" stroke-dasharray="3 2"/>
<path d="M331.5 584.5 L338.5 584.5 L338.5 618 L331.5 618 Z" stroke="none" fill="url(#h45)"/>
<path d="M331.5 584.5 L338.5 584.5 L338.5 618 L331.5 618 Z" stroke="#000000" fill="none" stroke-dasharray="3 2"/>
<path d="M382.5 450.5 L389.5 450.5 L389.5 478 L382.5 478 Z" stroke="none" fill="url(#h45)"/>
<path d="M382.5 450.5 L389.5 450.5 L389.5 478 L382.5 478 Z" stroke="#000000" fill="none" stroke-dasharray="3 2"/>
<path d="M431.5 450.5 L438.5 450.5 L438.5 478 L431.5 478 Z" stroke="none" fill="url(#h45)"/>
<path d="M431.5 450.5 L438.5 450.5 L438.5 478 L431.5 478 Z" stroke="#000000" fill="none" stroke-dasharray="3 2"/>
<path d="M382.5 586.5 L389.5 586.5 L389.5 618 L382.5 618 Z" stroke="none" fill="url(#h45)"/>
<path d="M382.5 586.5 L389.5 586.5 L389.5 618 L382.5 618 Z" stroke="#000000" fill="none" stroke-dasharray="3 2"/>
<path d="M431.5 586.5 L438.5 586.5 L438.5 618 L431.5 618 Z" stroke="none" fill="url(#h45)"/>
<path d="M431.5 586.5 L438.5 586.5 L438.5 618 L431.5 618 Z" stroke="#000000" fill="none" stroke-dasharray="3 2"/>
<path d="M298.5 462 L309.0 462 L309.0 480 L298.5 480 Z" stroke="none" fill="url(#h45)"/>
<path d="M298.5 584.5 L309.0 584.5 L309.0 610 L298.5 610 Z" stroke="none" fill="url(#h45)"/>
<path d="M328.0 462 L338.5 462 L338.5 480 L328.0 480 Z" stroke="none" fill="url(#h45)"/>
<path d="M328.0 584.5 L338.5 584.5 L338.5 610 L328.0 610 Z" stroke="none" fill="url(#h45)"/>
<path d="M382.5 462 L394.5 462 L394.5 478 L382.5 478 Z" stroke="none" fill="url(#h45)"/>
<path d="M382.5 586.5 L394.5 586.5 L394.5 610 L382.5 610 Z" stroke="none" fill="url(#h45)"/>
<path d="M426.5 462 L438.5 462 L438.5 478 L426.5 478 Z" stroke="none" fill="url(#h45)"/>
<path d="M426.5 586.5 L438.5 586.5 L438.5 610 L426.5 610 Z" stroke="none" fill="url(#h45)"/>
<path d="M389.5 478 L394.5 478 L394.5 484.5 L389.5 484.5 Z" stroke="none" fill="url(#h45)"/>
<path d="M426.5 478 L430.5 478 L430.5 484.5 L426.5 484.5 Z" stroke="none" fill="url(#h45)"/>
<path d="M497 553.5 L502 553.5 L502 586 L497.5 595 L464 595 L464 590.5 L493 590.5 L497 585 Z" stroke="none" fill="url(#h45)"/>
<path d="M497 553.5 L502 553.5 L502 586 L497.5 595 L464 595 L464 590.5 L493 590.5 L497 585 Z" stroke="#000000" fill="none" stroke-dasharray="3 2"/>
<rect x="237.5" y="443" width="18" height="8" fill="#fff"/>
<rect x="397" y="617.5" width="27.5" height="9" fill="#fff"/>
<path d="M164.5 600 L164.5 467.5 A11 12.5 0 0 1 175.5 455 L217 454.5 L217 444" stroke="#000000" fill="none"/>
<path d="M183.5 454.5 Q185 446 192.5 445.5 L217 445.5" stroke="#000000" fill="none"/>
<path d="M189 454.5 Q192 448.5 200 448.5 Q207 448.5 211 454.5" stroke="#000000" fill="none"/>
<line x1="198" y1="454" x2="203" y2="454" stroke="#000000" stroke-width="2"/>
<path d="M164.5 600 Q166 610 178 613 L183.5 614.5 Q186 623 194.5 623.5 L217 623.5" stroke="#000000" fill="none"/>
<path d="M187 614.5 Q190 620.5 198 620.5 Q205 620.5 208.5 614.5" stroke="#000000" fill="none"/>
<path d="M217 444.0 L274.5 444.0 L274.5 454.5 L286.5 454.5 L286.5 444.0 L350.5 444.0 L350.5 454.5 L368.5 454.5 L368.5 444.0 L451.5 444.0 L451.5 454.5 L507 454.5" stroke="#000000" fill="none"/>
<line x1="237" y1="444.0" x2="256" y2="444.0" stroke="#fff"/>
<line x1="237" y1="437.5" x2="237" y2="483" stroke="#000000"/>
<line x1="255.5" y1="437.5" x2="255.5" y2="483" stroke="#000000"/>
<path d="M507 454.5 Q520 458 521.5 472.5 L521.5 553.5 L497 553.5" stroke="#000000" fill="none"/>
<path d="M451.5 445.5 L493 445.5 L501 451 L501 454.5" stroke="#000000" fill="none"/>
<path d="M475 454.5 L480.5 448.5 L491 448.5 L499 454.5" stroke="#000000" fill="none"/>
<line x1="483" y1="454" x2="488" y2="454" stroke="#000000" stroke-width="2"/>
<path d="M217 625.0 L274.5 625.0 L274.5 615 L286.5 615 L286.5 625.0 L350.5 625.0 L350.5 615 L369.5 615 L369.5 625.0 L451.5 625.0 L451.5 613.5 L464 613.5" stroke="#000000" fill="none"/>
<path d="M451.5 623.5 L491 623.5 Q501.5 622 502 612 L502 553.5" stroke="#000000" fill="none"/>
<line x1="464" y1="590.5" x2="464" y2="613.5" stroke="#000000"/>
<path d="M462.5 601.5 Q460 604.5 462.5 607.5" stroke="#000000" fill="none" stroke-width="1.5"/>
<rect x="217" y="614.5" width="7" height="10.5" stroke="#000000" fill="none"/>
<line x1="217" y1="618" x2="223" y2="618" stroke="#000000" stroke-width="2"/>
<rect x="157.5" y="485.5" width="7.0" height="9.5" stroke="#000000" fill="none"/>
<line x1="158" y1="485.5" x2="158" y2="495" stroke="#000000" stroke-width="2"/>
<rect x="157.5" y="573.5" width="7.0" height="10.0" stroke="#000000" fill="none"/>
<line x1="158" y1="573.5" x2="158" y2="583.5" stroke="#000000" stroke-width="2"/>
<rect x="521.5" y="485.5" width="5.5" height="10.0" stroke="#000000" fill="none"/>
<path d="M521.5 530 Q523.5 535 521.5 539.5" stroke="#000000" fill="none"/>
<rect x="225.5" y="439.5" width="9.0" height="4.5" stroke="#000000" fill="none"/>
<line x1="228.5" y1="439.5" x2="228.5" y2="444.0" stroke="#000000"/>
<line x1="232.5" y1="439.5" x2="232.5" y2="444.0" stroke="#000000"/>
<rect x="225.5" y="625.0" width="9.0" height="3.5" stroke="#000000" fill="none"/>
<line x1="228.5" y1="625.0" x2="228.5" y2="628.5" stroke="#000000"/>
<line x1="232.5" y1="625.0" x2="232.5" y2="628.5" stroke="#000000"/>
<rect x="257" y="439.5" width="10.5" height="4.5" stroke="#000000" fill="none"/>
<line x1="260.5" y1="439.5" x2="260.5" y2="444.0" stroke="#000000"/>
<line x1="264.5" y1="439.5" x2="264.5" y2="444.0" stroke="#000000"/>
<rect x="257" y="625.0" width="10.5" height="3.5" stroke="#000000" fill="none"/>
<line x1="260.5" y1="625.0" x2="260.5" y2="628.5" stroke="#000000"/>
<line x1="264.5" y1="625.0" x2="264.5" y2="628.5" stroke="#000000"/>
<rect x="295.5" y="439.5" width="9.5" height="4.5" stroke="#000000" fill="none"/>
<line x1="299.5" y1="439.5" x2="299.5" y2="444.0" stroke="#000000"/>
<line x1="302.5" y1="439.5" x2="302.5" y2="444.0" stroke="#000000"/>
<rect x="295.5" y="625.0" width="9.5" height="3.5" stroke="#000000" fill="none"/>
<line x1="299.5" y1="625.0" x2="299.5" y2="628.5" stroke="#000000"/>
<line x1="302.5" y1="625.0" x2="302.5" y2="628.5" stroke="#000000"/>
<rect x="331.5" y="439.5" width="11.5" height="4.5" stroke="#000000" fill="none"/>
<line x1="335.5" y1="439.5" x2="335.5" y2="444.0" stroke="#000000"/>
<line x1="339.5" y1="439.5" x2="339.5" y2="444.0" stroke="#000000"/>
<rect x="331.5" y="625.0" width="11.5" height="3.5" stroke="#000000" fill="none"/>
<line x1="335.5" y1="625.0" x2="335.5" y2="628.5" stroke="#000000"/>
<line x1="339.5" y1="625.0" x2="339.5" y2="628.5" stroke="#000000"/>
<rect x="381.5" y="439.5" width="9.5" height="4.5" stroke="#000000" fill="none"/>
<line x1="385.5" y1="439.5" x2="385.5" y2="444.0" stroke="#000000"/>
<line x1="388.5" y1="439.5" x2="388.5" y2="444.0" stroke="#000000"/>
<rect x="381.5" y="625.0" width="9.5" height="3.5" stroke="#000000" fill="none"/>
<line x1="385.5" y1="625.0" x2="385.5" y2="628.5" stroke="#000000"/>
<line x1="388.5" y1="625.0" x2="388.5" y2="628.5" stroke="#000000"/>
<rect x="429.5" y="439.5" width="11.5" height="4.5" stroke="#000000" fill="none"/>
<line x1="433.5" y1="439.5" x2="433.5" y2="444.0" stroke="#000000"/>
<line x1="437.5" y1="439.5" x2="437.5" y2="444.0" stroke="#000000"/>
<rect x="429.5" y="625.0" width="11.5" height="3.5" stroke="#000000" fill="none"/>
<line x1="433.5" y1="625.0" x2="433.5" y2="628.5" stroke="#000000"/>
<line x1="437.5" y1="625.0" x2="437.5" y2="628.5" stroke="#000000"/>
<path d="M188.5 556 L188.5 481 Q188.5 478.5 191 478.5 L229 478.5 M263 478.5 L298 478.5 M338 478.5 L382.5 478.5 M438.5 478.5 L494 478.5 Q497 478.5 497 482 L497 553.5" stroke="#000000" fill="none"/>
<line x1="188.5" y1="534" x2="497" y2="534" stroke="#000000" stroke-dasharray="60 2 4 2"/>
<line x1="263" y1="590.5" x2="298.5" y2="590.5" stroke="#000000"/>
<line x1="338" y1="590.5" x2="382.5" y2="590.5" stroke="#000000"/>
<line x1="438" y1="590.5" x2="464" y2="590.5" stroke="#000000"/>
<line x1="480.5" y1="477" x2="480.5" y2="540" stroke="#000000"/>
<rect x="484" y="528.5" width="12.5" height="12.0" stroke="#000000" fill="none"/>
<line x1="484" y1="533" x2="496.5" y2="533" stroke="#000000"/>
<line x1="477.5" y1="537" x2="496.5" y2="537" stroke="#000000"/>
<path d="M484 532 L477.5 532 L477.5 537" stroke="#000000" fill="none"/>
<rect x="272" y="540.5" width="1" height="1" fill="#000"/>
<path d="M164.5 552.5 L183.5 558.5 L217.5 567 L219 595 L223 614" stroke="#000000" fill="none"/>
<path d="M183.5 558.5 L183.5 595 L219 595" stroke="#000000" fill="none"/>
<line x1="197.5" y1="595.5" x2="197.5" y2="614.5" stroke="#000000" stroke-width="2.4"/>
<line x1="197.5" y1="614.5" x2="223" y2="614.5" stroke="#000000"/>
<path d="M223 589.5 L229 589.5" stroke="#000000" fill="none"/>
<line x1="337.5" y1="484.5" x2="484" y2="484.5" stroke="#000000" stroke-width="1.4"/>
<line x1="337.5" y1="530.5" x2="484" y2="530.5" stroke="#000000" stroke-width="1.4"/>
<line x1="339.5" y1="484.5" x2="339.5" y2="530.5" stroke="#000000"/>
<line x1="342.5" y1="484.5" x2="342.5" y2="530.5" stroke="#000000"/>
<line x1="484" y1="484.5" x2="484" y2="530.5" stroke="#000000"/>
<line x1="480.5" y1="484.5" x2="480.5" y2="530.5" stroke="#000000"/>
<line x1="478.5" y1="484.5" x2="478.5" y2="530.5" stroke="#000000" stroke-dasharray="4 2"/>
<rect x="342.5" y="484.5" width="51.0" height="46.0" stroke="none" fill="url(#h45)"/>
<path d="M346.8 484.5 L350.1 494.2 L353.1 499.7 L357.2 501.8 L377.7 501.8 L382.3 497.8 L384.8 490.9 L387.1 484.5 Z" stroke="none" fill="#fff"/>
<path d="M346.8 484.5 L350.1 494.2 L353.1 499.7 L357.2 501.8 L377.7 501.8 L382.3 497.8 L384.8 490.9 L387.1 484.5" stroke="#000000" fill="none"/>
<line x1="352.7" y1="496.5" x2="383.3" y2="496.5" stroke="#808080"/>
<path d="M346.8 530.5 L350.1 520.8 L353.1 515.3 L357.2 513.2 L377.7 513.2 L382.3 517.2 L384.8 524.1 L387.1 530.5 Z" stroke="none" fill="#fff"/>
<path d="M346.8 530.5 L350.1 520.8 L353.1 515.3 L357.2 513.2 L377.7 513.2 L382.3 517.2 L384.8 524.1 L387.1 530.5" stroke="#000000" fill="none"/>
<line x1="352.7" y1="519.5" x2="383.3" y2="519.5" stroke="#808080"/>
<rect x="358.7" y="501.8" width="15.9" height="11.4" stroke="#000000" fill="#fff"/>
<rect x="427.5" y="484.5" width="51.0" height="46.0" stroke="none" fill="url(#h45)"/>
<path d="M474.2 484.5 L470.9 494.2 L467.9 499.7 L463.8 501.8 L443.3 501.8 L438.7 497.8 L436.2 490.9 L433.9 484.5 Z" stroke="none" fill="#fff"/>
<path d="M474.2 484.5 L470.9 494.2 L467.9 499.7 L463.8 501.8 L443.3 501.8 L438.7 497.8 L436.2 490.9 L433.9 484.5" stroke="#000000" fill="none"/>
<line x1="468.3" y1="496.5" x2="437.7" y2="496.5" stroke="#808080"/>
<path d="M474.2 530.5 L470.9 520.8 L467.9 515.3 L463.8 513.2 L443.3 513.2 L438.7 517.2 L436.2 524.1 L433.9 530.5 Z" stroke="none" fill="#fff"/>
<path d="M474.2 530.5 L470.9 520.8 L467.9 515.3 L463.8 513.2 L443.3 513.2 L438.7 517.2 L436.2 524.1 L433.9 530.5" stroke="#000000" fill="none"/>
<line x1="468.3" y1="519.5" x2="437.7" y2="519.5" stroke="#808080"/>
<rect x="446.4" y="501.8" width="15.9" height="11.4" stroke="#000000" fill="#fff"/>
<line x1="393.5" y1="484.5" x2="393.5" y2="586.5" stroke="#000000"/>
<line x1="427.5" y1="484.5" x2="427.5" y2="586.5" stroke="#000000"/>
<rect x="391.5" y="530.5" width="38.0" height="6.0" stroke="#000000" fill="#fff"/>
<line x1="391.5" y1="534" x2="429.5" y2="534" stroke="#000000" stroke-dasharray="8 2"/>
<rect x="405.5" y="491" width="10" height="33.5" rx="5" stroke="#000" fill="none"/>
<line x1="261.5" y1="552.5" x2="379.5" y2="552.5" stroke="#000000" stroke-width="1.4"/>
<line x1="261.5" y1="583" x2="379.5" y2="583" stroke="#000000" stroke-width="1.4"/>
<line x1="261.5" y1="552.5" x2="261.5" y2="583" stroke="#000000" stroke-width="2"/>
<line x1="264.5" y1="552.5" x2="264.5" y2="583" stroke="#000000" stroke-dasharray="4 2"/>
<line x1="379.5" y1="552.5" x2="379.5" y2="583" stroke="#000000"/>
<line x1="377.5" y1="544" x2="377.5" y2="590.5" stroke="#000000"/>
<line x1="375.5" y1="552.5" x2="375.5" y2="583" stroke="#000000" stroke-dasharray="4 2"/>
<rect x="264.5" y="552.5" width="41.0" height="30.5" stroke="none" fill="url(#h45)"/>
<path d="M268.0 552.5 L270.6 558.9 L270.2 562.6 L273.5 563.9 L292.7 563.9 L296.5 561.3 L298.5 556.8 L300.4 552.5 Z" stroke="none" fill="#fff"/>
<path d="M268.0 552.5 L270.6 558.9 L270.2 562.6 L273.5 563.9 L292.7 563.9 L296.5 561.3 L298.5 556.8 L300.4 552.5" stroke="#000000" fill="none"/>
<line x1="272.7" y1="560.5" x2="297.3" y2="560.5" stroke="#808080"/>
<path d="M268.0 583.0 L270.6 576.6 L270.2 572.9 L273.5 571.6 L292.7 571.6 L296.5 574.2 L298.5 578.7 L300.4 583.0 Z" stroke="none" fill="#fff"/>
<path d="M268.0 583.0 L270.6 576.6 L270.2 572.9 L273.5 571.6 L292.7 571.6 L296.5 574.2 L298.5 578.7 L300.4 583.0" stroke="#000000" fill="none"/>
<line x1="272.7" y1="576.5" x2="297.3" y2="576.5" stroke="#808080"/>
<rect x="274.8" y="563.9" width="15.4" height="7.7" stroke="#000000" fill="#fff"/>
<rect x="330.5" y="552.5" width="45.0" height="30.5" stroke="none" fill="url(#h45)"/>
<path d="M371.7 552.5 L368.8 558.9 L367.3 562.6 L363.7 563.9 L344.1 563.9 L340.4 561.3 L338.1 556.8 L336.1 552.5 Z" stroke="none" fill="#fff"/>
<path d="M371.7 552.5 L368.8 558.9 L367.3 562.6 L363.7 563.9 L344.1 563.9 L340.4 561.3 L338.1 556.8 L336.1 552.5" stroke="#000000" fill="none"/>
<line x1="366.5" y1="560.5" x2="339.5" y2="560.5" stroke="#808080"/>
<path d="M371.7 583.0 L368.8 576.6 L367.3 572.9 L363.7 571.6 L344.1 571.6 L340.4 574.2 L338.1 578.7 L336.1 583.0 Z" stroke="none" fill="#fff"/>
<path d="M371.7 583.0 L368.8 576.6 L367.3 572.9 L363.7 571.6 L344.1 571.6 L340.4 574.2 L338.1 578.7 L336.1 583.0" stroke="#000000" fill="none"/>
<line x1="366.5" y1="576.5" x2="339.5" y2="576.5" stroke="#808080"/>
<rect x="346.8" y="563.9" width="15.5" height="7.7" stroke="#000000" fill="#fff"/>
<line x1="305.5" y1="536" x2="305.5" y2="584.5" stroke="#000000"/>
<line x1="330.5" y1="536" x2="330.5" y2="584.5" stroke="#000000"/>
<rect x="314.5" y="556" width="8" height="22.5" rx="4" stroke="#000" fill="none"/>
<rect x="294.5" y="484.5" width="43" height="47" rx="2.5" stroke="#000" fill="none"/>
<path d="M336 486 Q331 508 336 530" stroke="#00ffff" fill="none" stroke-dasharray="3 2"/>
<path d="M336 486 Q340.5 508 336 530" stroke="#00ffff" fill="none" stroke-dasharray="3 2"/>
<path d="M336 486 Q331 508 336 530 Q340.5 508 336 486 Z" stroke="none" fill="url(#h45)"/>
<line x1="333.5" y1="486" x2="333.5" y2="530" stroke="#000000" stroke-dasharray="10 2"/>
<path d="M303 531.5 L303 536 L333.5 536 L333.5 531.5" stroke="#000000" fill="none"/>
<line x1="298" y1="480" x2="298" y2="531" stroke="#00ff00"/>
<path d="M257 545 Q243 552 242.5 568 Q243 584 255 590 L259 590 L259 545 Z" stroke="none" fill="url(#h45)"/>
<rect x="230.5" y="551.5" width="29.0" height="32.5" stroke="#000000" fill="none"/>
<line x1="232" y1="544" x2="232" y2="589" stroke="#000000"/>
<line x1="259.5" y1="544" x2="259.5" y2="589" stroke="#000000" stroke-width="2"/>
<path d="M257 545 Q243 552 242.5 568 Q243 584 255 590" stroke="#000000" fill="none"/>
<line x1="236.5" y1="483" x2="236.5" y2="551.5" stroke="#000000"/>
<line x1="255.5" y1="483" x2="255.5" y2="551.5" stroke="#000000"/>
<line x1="236.5" y1="584" x2="236.5" y2="589.5" stroke="#000000"/>
<line x1="255.5" y1="584" x2="255.5" y2="589.5" stroke="#000000"/>
<line x1="240.5" y1="406.5" x2="252" y2="406.5" stroke="#000000" stroke-width="2"/>
<line x1="240.5" y1="406.5" x2="240.5" y2="437.5" stroke="#000000"/>
<line x1="252" y1="406.5" x2="252" y2="437.5" stroke="#000000"/>
<rect x="236" y="412" width="21" height="18" fill="#fff"/>
<path d="M237 416.5 L240 414.5 L243 417.5 L246.5 414 L250 417.5 L253 414 L255 416" stroke="#000000" fill="none"/>
<path d="M237 427 L240 424 L243 428 L247 423 L250 428 L253 424 L255 426" stroke="#000000" fill="none"/>
<line x1="240.5" y1="437.5" x2="252" y2="437.5" stroke="#000000"/>
<line x1="237" y1="437.5" x2="237" y2="483" stroke="#000000"/>
<line x1="255.5" y1="437.5" x2="255.5" y2="483" stroke="#000000"/>
<rect x="396.5" y="611" width="28.0" height="24" stroke="#000000" fill="#fff"/>
<path d="M394 639.5 L399 642 L404 638 L409 642.5 L414 638.5 L419 642 L426 638" stroke="#000000" fill="none"/>
<path d="M394 650 L399 652.5 L404 648 L409 653 L414 648.5 L419 652 L426 649" stroke="#000000" fill="none"/>
<path d="M398 652 L399 656.5 L421 656.5 L423 651" stroke="#000000" fill="none"/>
<line x1="398" y1="654.5" x2="422" y2="654.5" stroke="#000000"/>
<rect x="231.5" y="463.0" width="6.0" height="11.0" stroke="#000000" fill="none" stroke-dasharray="2 2"/>
<line x1="231.5" y1="463.0" x2="237.5" y2="466.0" stroke="#000000"/>
<line x1="231.5" y1="474.0" x2="237.5" y2="471.0" stroke="#000000"/>
<line x1="230.5" y1="468.5" x2="238.5" y2="468.5" stroke="#ff0000"/>
<line x1="234.5" y1="464.5" x2="234.5" y2="472.5" stroke="#ff0000"/>
<rect x="231.5" y="598.0" width="6.0" height="11.0" stroke="#000000" fill="none" stroke-dasharray="2 2"/>
<line x1="231.5" y1="598.0" x2="237.5" y2="601.0" stroke="#000000"/>
<line x1="231.5" y1="609.0" x2="237.5" y2="606.0" stroke="#000000"/>
<line x1="230.5" y1="603.5" x2="238.5" y2="603.5" stroke="#ff0000"/>
<line x1="234.5" y1="599.5" x2="234.5" y2="607.5" stroke="#ff0000"/>
<rect x="255" y="463.0" width="6" height="11.0" stroke="#000000" fill="none" stroke-dasharray="2 2"/>
<line x1="255" y1="463.0" x2="261" y2="466.0" stroke="#000000"/>
<line x1="255" y1="474.0" x2="261" y2="471.0" stroke="#000000"/>
<line x1="254" y1="468.5" x2="262" y2="468.5" stroke="#ff0000"/>
<line x1="258" y1="464.5" x2="258" y2="472.5" stroke="#ff0000"/>
<rect x="255" y="598.0" width="6" height="11.0" stroke="#000000" fill="none" stroke-dasharray="2 2"/>
<line x1="255" y1="598.0" x2="261" y2="601.0" stroke="#000000"/>
<line x1="255" y1="609.0" x2="261" y2="606.0" stroke="#000000"/>
<line x1="254" y1="603.5" x2="262" y2="603.5" stroke="#ff0000"/>
<line x1="258" y1="599.5" x2="258" y2="607.5" stroke="#ff0000"/>
<rect x="301" y="463.0" width="6" height="11.0" stroke="#000000" fill="none" stroke-dasharray="2 2"/>
<line x1="301" y1="463.0" x2="307" y2="466.0" stroke="#000000"/>
<line x1="301" y1="474.0" x2="307" y2="471.0" stroke="#000000"/>
<line x1="300" y1="468.5" x2="308" y2="468.5" stroke="#ff0000"/>
<line x1="304" y1="464.5" x2="304" y2="472.5" stroke="#ff0000"/>
<rect x="301" y="598.0" width="6" height="11.0" stroke="#000000" fill="none" stroke-dasharray="2 2"/>
<line x1="301" y1="598.0" x2="307" y2="601.0" stroke="#000000"/>
<line x1="301" y1="609.0" x2="307" y2="606.0" stroke="#000000"/>
<line x1="300" y1="603.5" x2="308" y2="603.5" stroke="#ff0000"/>
<line x1="304" y1="599.5" x2="304" y2="607.5" stroke="#ff0000"/>
<rect x="329.5" y="463.0" width="6.0" height="11.0" stroke="#000000" fill="none" stroke-dasharray="2 2"/>
<line x1="329.5" y1="463.0" x2="335.5" y2="466.0" stroke="#000000"/>
<line x1="329.5" y1="474.0" x2="335.5" y2="471.0" stroke="#000000"/>
<line x1="328.5" y1="468.5" x2="336.5" y2="468.5" stroke="#ff0000"/>
<line x1="332.5" y1="464.5" x2="332.5" y2="472.5" stroke="#ff0000"/>
<rect x="329.5" y="598.0" width="6.0" height="11.0" stroke="#000000" fill="none" stroke-dasharray="2 2"/>
<line x1="329.5" y1="598.0" x2="335.5" y2="601.0" stroke="#000000"/>
<line x1="329.5" y1="609.0" x2="335.5" y2="606.0" stroke="#000000"/>
<line x1="328.5" y1="603.5" x2="336.5" y2="603.5" stroke="#ff0000"/>
<line x1="332.5" y1="599.5" x2="332.5" y2="607.5" stroke="#ff0000"/>
<rect x="385.5" y="463.0" width="6.0" height="11.0" stroke="#000000" fill="none" stroke-dasharray="2 2"/>
<line x1="385.5" y1="463.0" x2="391.5" y2="466.0" stroke="#000000"/>
<line x1="385.5" y1="474.0" x2="391.5" y2="471.0" stroke="#000000"/>
<line x1="384.5" y1="468.5" x2="392.5" y2="468.5" stroke="#ff0000"/>
<line x1="388.5" y1="464.5" x2="388.5" y2="472.5" stroke="#ff0000"/>
<rect x="385.5" y="598.0" width="6.0" height="11.0" stroke="#000000" fill="none" stroke-dasharray="2 2"/>
<line x1="385.5" y1="598.0" x2="391.5" y2="601.0" stroke="#000000"/>
<line x1="385.5" y1="609.0" x2="391.5" y2="606.0" stroke="#000000"/>
<line x1="384.5" y1="603.5" x2="392.5" y2="603.5" stroke="#ff0000"/>
<line x1="388.5" y1="599.5" x2="388.5" y2="607.5" stroke="#ff0000"/>
<rect x="429.5" y="463.0" width="6.0" height="11.0" stroke="#000000" fill="none" stroke-dasharray="2 2"/>
<line x1="429.5" y1="463.0" x2="435.5" y2="466.0" stroke="#000000"/>
<line x1="429.5" y1="474.0" x2="435.5" y2="471.0" stroke="#000000"/>
<line x1="428.5" y1="468.5" x2="436.5" y2="468.5" stroke="#ff0000"/>
<line x1="432.5" y1="464.5" x2="432.5" y2="472.5" stroke="#ff0000"/>
<rect x="429.5" y="598.0" width="6.0" height="11.0" stroke="#000000" fill="none" stroke-dasharray="2 2"/>
<line x1="429.5" y1="598.0" x2="435.5" y2="601.0" stroke="#000000"/>
<line x1="429.5" y1="609.0" x2="435.5" y2="606.0" stroke="#000000"/>
<line x1="428.5" y1="603.5" x2="436.5" y2="603.5" stroke="#ff0000"/>
<line x1="432.5" y1="599.5" x2="432.5" y2="607.5" stroke="#ff0000"/>
<line x1="310" y1="466" x2="327" y2="466" stroke="#000000" stroke-width="2"/>
<line x1="394.5" y1="463" x2="435.5" y2="463" stroke="#000000" stroke-width="2"/>
<line x1="390.5" y1="452" x2="430" y2="452" stroke="#000000"/>
<line x1="305" y1="453" x2="332" y2="453" stroke="#000000"/>
<line x1="241" y1="609" x2="250" y2="609" stroke="#000000" stroke-width="2"/>
<line x1="310" y1="608" x2="327" y2="608" stroke="#000000" stroke-width="2"/>
<line x1="394.5" y1="610.5" x2="426.5" y2="610.5" stroke="#000000"/>
<path d="M301 611 Q304 616 310 616.5 L327 616.5 Q333 616 336 611" stroke="#000000" fill="none"/>
<path d="M232 611 Q235 615.5 240 616 L252 616 Q257 615.5 260 611" stroke="#000000" fill="none"/>
<circle cx="211.5" cy="463.5" r="3.2" stroke="#000000" fill="none" stroke-width="1.8"/>
<line x1="205.5" y1="463.5" x2="217.5" y2="463.5" stroke="#ff0000"/>
<line x1="211.5" y1="457.5" x2="211.5" y2="469.5" stroke="#ff0000"/>
<circle cx="280.5" cy="463.5" r="3.2" stroke="#000000" fill="none" stroke-width="1.8"/>
<line x1="274.5" y1="463.5" x2="286.5" y2="463.5" stroke="#ff0000"/>
<line x1="280.5" y1="457.5" x2="280.5" y2="469.5" stroke="#ff0000"/>
<circle cx="359.5" cy="463.5" r="3.2" stroke="#000000" fill="none" stroke-width="1.8"/>
<line x1="353.5" y1="463.5" x2="365.5" y2="463.5" stroke="#ff0000"/>
<line x1="359.5" y1="457.5" x2="359.5" y2="469.5" stroke="#ff0000"/>
<circle cx="465.5" cy="463.5" r="3.2" stroke="#000000" fill="none" stroke-width="1.8"/>
<line x1="459.5" y1="463.5" x2="471.5" y2="463.5" stroke="#ff0000"/>
<line x1="465.5" y1="457.5" x2="465.5" y2="469.5" stroke="#ff0000"/>
<circle cx="280.5" cy="604.5" r="3.2" stroke="#000000" fill="none" stroke-width="1.8"/>
<line x1="274.5" y1="604.5" x2="286.5" y2="604.5" stroke="#ff0000"/>
<line x1="280.5" y1="598.5" x2="280.5" y2="610.5" stroke="#ff0000"/>
<circle cx="359.5" cy="604.5" r="3.2" stroke="#000000" fill="none" stroke-width="1.8"/>
<line x1="353.5" y1="604.5" x2="365.5" y2="604.5" stroke="#ff0000"/>
<line x1="359.5" y1="598.5" x2="359.5" y2="610.5" stroke="#ff0000"/>
<circle cx="173.5" cy="499.5" r="2.5" stroke="#000000" fill="none" stroke-width="1.8"/>
<line x1="168.5" y1="499.5" x2="178.5" y2="499.5" stroke="#ff0000"/>
<line x1="173.5" y1="494.5" x2="173.5" y2="504.5" stroke="#ff0000"/>
<circle cx="510.5" cy="499.5" r="3.5" stroke="#000000" fill="none" stroke-width="1.8"/>
<line x1="504.0" y1="499.5" x2="517.0" y2="499.5" stroke="#ff0000"/>
<line x1="510.5" y1="493.0" x2="510.5" y2="506.0" stroke="#ff0000"/>
<path d="M217.1 607.8 L211.5 611.0 L205.9 607.8 L205.9 601.2 L211.5 598.0 L217.1 601.2 Z" stroke="#000000" fill="none"/>
<circle cx="211.5" cy="604.5" r="3.3" stroke="#000000" fill="none"/>
<line x1="202.5" y1="604.5" x2="220.5" y2="604.5" stroke="#ff0000"/>
<line x1="211.5" y1="595.5" x2="211.5" y2="613.5" stroke="#ff0000"/>
<path d="M178.0 571.1 L173.5 573.7 L169.0 571.1 L169.0 565.9 L173.5 563.3 L178.0 565.9 Z" stroke="#000000" fill="none"/>
<line x1="167.5" y1="568.5" x2="179.5" y2="568.5" stroke="#ff0000"/>
<line x1="173.5" y1="562.5" x2="173.5" y2="574.5" stroke="#ff0000"/>
<circle cx="485.5" cy="609" r="12" stroke="#000000" fill="none"/>
<rect x="480.5" y="604" width="10" height="10" rx="2.5" stroke="#000" fill="none" transform="rotate(45 485.5 609)"/>
<line x1="473.0" y1="609" x2="498.0" y2="609" stroke="#ff0000"/>
<line x1="485.5" y1="596.5" x2="485.5" y2="621.5" stroke="#ff0000"/>
<line x1="434.5" y1="607" x2="434.5" y2="627" stroke="#ff0000" stroke-dasharray="5 2"/>
<line x1="245.5" y1="404.5" x2="245.5" y2="616" stroke="#ff0000" stroke-dasharray="22 2 3 2"/>
<line x1="318.5" y1="452" x2="318.5" y2="616" stroke="#ff0000" stroke-dasharray="22 2 3 2"/>
<line x1="410.5" y1="460" x2="410.5" y2="658" stroke="#ff0000" stroke-dasharray="22 2 3 2"/>
<line x1="470.5" y1="450.5" x2="470.5" y2="618" stroke="#00ff00"/>
<line x1="451.5" y1="450.5" x2="473" y2="450.5" stroke="#00ff00"/>
<line x1="443.5" y1="534" x2="473" y2="534" stroke="#00ff00"/>
<line x1="451.5" y1="618.5" x2="473" y2="618.5" stroke="#00ff00"/>
<rect x="466.5" y="494.5" width="4.0" height="6.5" stroke="#00ff00" fill="none"/>
<rect x="466.5" y="572.5" width="4.0" height="7.0" stroke="#00ff00" fill="none"/>
<line x1="393.5" y1="504.5" x2="427.5" y2="504.5" stroke="#00ff00"/>
<rect x="396.5" y="500.5" width="3.0" height="4.0" stroke="#00ff00" fill="none"/>
<rect x="399.5" y="500.5" width="3.0" height="4.0" stroke="#00ff00" fill="none"/>
<rect x="402.5" y="500.5" width="3.0" height="4.0" stroke="#00ff00" fill="none"/>
<rect x="407.5" y="496.5" width="4.0" height="4.0" stroke="#00ff00" fill="none"/>
<rect x="407.5" y="500.5" width="4.0" height="4.0" stroke="#00ff00" fill="none"/>
<line x1="382.5" y1="475" x2="438.5" y2="475" stroke="#00ff00"/>
<line x1="394.5" y1="465.5" x2="426.5" y2="465.5" stroke="#00ff00"/>
<rect x="401.0" y="471.5" width="3.0" height="3.5" stroke="#00ff00" fill="none"/>
<rect x="404.0" y="471.5" width="3.0" height="3.5" stroke="#00ff00" fill="none"/>
<rect x="407.0" y="471.5" width="3.0" height="3.5" stroke="#00ff00" fill="none"/>
<rect x="412.0" y="471.5" width="6.0" height="3.5" stroke="#00ff00" fill="none"/>
<rect x="412.0" y="467" width="6.0" height="3.5" stroke="#00ff00" fill="none"/>
<rect x="401.0" y="462.0" width="3.0" height="3.5" stroke="#00ff00" fill="none"/>
<rect x="404.0" y="462.0" width="3.0" height="3.5" stroke="#00ff00" fill="none"/>
<rect x="412.0" y="462.0" width="6.0" height="3.5" stroke="#00ff00" fill="none"/>
<rect x="412.0" y="457.5" width="6.0" height="3.5" stroke="#00ff00" fill="none"/>
<line x1="298" y1="479.5" x2="338" y2="479.5" stroke="#00ff00"/>
<line x1="307" y1="460.5" x2="333" y2="460.5" stroke="#00ff00"/>
<rect x="309.0" y="476.0" width="3.0" height="3.5" stroke="#00ff00" fill="none"/>
<rect x="312.0" y="476.0" width="3.0" height="3.5" stroke="#00ff00" fill="none"/>
<rect x="315.0" y="476.0" width="3.0" height="3.5" stroke="#00ff00" fill="none"/>
<rect x="320.0" y="476.0" width="6.0" height="3.5" stroke="#00ff00" fill="none"/>
<rect x="320.0" y="471.5" width="6.0" height="3.5" stroke="#00ff00" fill="none"/>
<rect x="309.0" y="457.0" width="3.0" height="3.5" stroke="#00ff00" fill="none"/>
<rect x="312.0" y="457.0" width="3.0" height="3.5" stroke="#00ff00" fill="none"/>
<rect x="315.0" y="457.0" width="3.0" height="3.5" stroke="#00ff00" fill="none"/>
<rect x="320.0" y="457.0" width="6.0" height="3.5" stroke="#00ff00" fill="none"/>
<rect x="320.0" y="452.5" width="6.0" height="3.5" stroke="#00ff00" fill="none"/>
<line x1="229.5" y1="482.5" x2="263" y2="482.5" stroke="#00ff00"/>
<line x1="235" y1="468" x2="258" y2="468" stroke="#00ff00"/>
<rect x="236.0" y="479.0" width="3.0" height="3.5" stroke="#00ff00" fill="none"/>
<rect x="239.0" y="479.0" width="3.0" height="3.5" stroke="#00ff00" fill="none"/>
<rect x="242.0" y="479.0" width="3.0" height="3.5" stroke="#00ff00" fill="none"/>
<rect x="247.0" y="479.0" width="6.0" height="3.5" stroke="#00ff00" fill="none"/>
<rect x="247.0" y="474.5" width="6.0" height="3.5" stroke="#00ff00" fill="none"/>
<rect x="236.0" y="464.5" width="3.0" height="3.5" stroke="#00ff00" fill="none"/>
<rect x="239.0" y="464.5" width="3.0" height="3.5" stroke="#00ff00" fill="none"/>
<rect x="242.0" y="464.5" width="3.0" height="3.5" stroke="#00ff00" fill="none"/>
<rect x="247.0" y="464.5" width="6.0" height="3.5" stroke="#00ff00" fill="none"/>
<rect x="247.0" y="460" width="6.0" height="3.5" stroke="#00ff00" fill="none"/>
<rect x="236.0" y="446.5" width="3.0" height="3.5" stroke="#00ff00" fill="none"/>
<rect x="239.0" y="446.5" width="3.0" height="3.5" stroke="#00ff00" fill="none"/>
<rect x="242.0" y="446.5" width="3.0" height="3.5" stroke="#00ff00" fill="none"/>
<rect x="247.0" y="446.5" width="6.0" height="3.5" stroke="#00ff00" fill="none"/>
<line x1="382.5" y1="611" x2="438.5" y2="611" stroke="#00ff00"/>
<rect x="401.0" y="607.5" width="3.0" height="3.5" stroke="#00ff00" fill="none"/>
<rect x="404.0" y="607.5" width="3.0" height="3.5" stroke="#00ff00" fill="none"/>
<rect x="407.0" y="607.5" width="3.0" height="3.5" stroke="#00ff00" fill="none"/>
<rect x="412.0" y="607.5" width="6.0" height="3.5" stroke="#00ff00" fill="none"/>
<rect x="412.0" y="603" width="6.0" height="3.5" stroke="#00ff00" fill="none"/>
<rect x="401.0" y="586.5" width="3.0" height="3.5" stroke="#00ff00" fill="none"/>
<rect x="404.0" y="586.5" width="3.0" height="3.5" stroke="#00ff00" fill="none"/>
<rect x="407.0" y="586.5" width="3.0" height="3.5" stroke="#00ff00" fill="none"/>
<rect x="412.0" y="586.5" width="6.0" height="3.5" stroke="#00ff00" fill="none"/>
<rect x="412.0" y="582" width="6.0" height="3.5" stroke="#00ff00" fill="none"/>
<line x1="298" y1="597" x2="338" y2="597" stroke="#00ff00"/>
<rect x="309.0" y="584.5" width="3.0" height="3.5" stroke="#00ff00" fill="none"/>
<rect x="312.0" y="584.5" width="3.0" height="3.5" stroke="#00ff00" fill="none"/>
<rect x="315.0" y="584.5" width="3.0" height="3.5" stroke="#00ff00" fill="none"/>
<rect x="320.0" y="584.5" width="6.0" height="3.5" stroke="#00ff00" fill="none"/>
<rect x="320.0" y="580" width="6.0" height="3.5" stroke="#00ff00" fill="none"/>
<rect x="309.0" y="599.5" width="3.0" height="3.5" stroke="#00ff00" fill="none"/>
<rect x="312.0" y="599.5" width="3.0" height="3.5" stroke="#00ff00" fill="none"/>
<rect x="315.0" y="599.5" width="3.0" height="3.5" stroke="#00ff00" fill="none"/>
<rect x="320.0" y="599.5" width="6.0" height="3.5" stroke="#00ff00" fill="none"/>
<rect x="320.0" y="595" width="6.0" height="3.5" stroke="#00ff00" fill="none"/>
<line x1="229.5" y1="613" x2="263" y2="613" stroke="#00ff00"/>
<rect x="236.0" y="609.5" width="3.0" height="3.5" stroke="#00ff00" fill="none"/>
<rect x="239.0" y="609.5" width="3.0" height="3.5" stroke="#00ff00" fill="none"/>
<rect x="242.0" y="609.5" width="3.0" height="3.5" stroke="#00ff00" fill="none"/>
<rect x="247.0" y="609.5" width="6.0" height="3.5" stroke="#00ff00" fill="none"/>
<rect x="247.0" y="605" width="6.0" height="3.5" stroke="#00ff00" fill="none"/>
<rect x="249" y="600" width="4" height="12" stroke="#00ff00" fill="#00ff00"/>
<line x1="302" y1="537.5" x2="337" y2="537.5" stroke="#00ff00"/>
<rect x="309.0" y="534.0" width="3.0" height="3.5" stroke="#00ff00" fill="none"/>
<rect x="312.0" y="534.0" width="3.0" height="3.5" stroke="#00ff00" fill="none"/>
<rect x="315.0" y="534.0" width="3.0" height="3.5" stroke="#00ff00" fill="none"/>
<rect x="320.0" y="534.0" width="6.0" height="3.5" stroke="#00ff00" fill="none"/>
<rect x="320.0" y="529.5" width="6.0" height="3.5" stroke="#00ff00" fill="none"/>
<line x1="302.5" y1="537.5" x2="302.5" y2="552.5" stroke="#00ff00"/>
<line x1="330.5" y1="537.5" x2="330.5" y2="552.5" stroke="#00ff00"/>
<line x1="234.5" y1="401" x2="258" y2="401" stroke="#00ff00"/>
<line x1="236.5" y1="392" x2="236.5" y2="445" stroke="#00ff00"/>
<line x1="251.5" y1="397" x2="251.5" y2="432" stroke="#00ff00"/>
<line x1="245.5" y1="406.5" x2="269" y2="406.5" stroke="#00ff00"/>
<line x1="267" y1="406.5" x2="267" y2="438" stroke="#00ff00"/>
<line x1="263" y1="406.5" x2="263" y2="438" stroke="#00ff00"/>
<rect x="238.5" y="397.5" width="3.0" height="3.5" stroke="#00ff00" fill="none"/>
<rect x="243.5" y="397.5" width="3.0" height="3.5" stroke="#00ff00" fill="none"/>
<rect x="249.5" y="397.5" width="3.0" height="3.5" stroke="#00ff00" fill="none"/>
<rect x="262.5" y="417.5" width="3.0" height="4.0" stroke="#00ff00" fill="none"/>
<line x1="391.5" y1="665.5" x2="429.5" y2="665.5" stroke="#00ff00"/>
<line x1="397.5" y1="660" x2="397.5" y2="668" stroke="#00ff00"/>
<line x1="422.5" y1="660" x2="422.5" y2="668" stroke="#00ff00"/>
<rect x="404.5" y="661.5" width="3.5" height="3.5" stroke="#00ff00" fill="none"/>
<rect x="409.5" y="661.5" width="3.5" height="3.5" stroke="#00ff00" fill="none"/>
<rect x="416.5" y="661.5" width="3.5" height="3.5" stroke="#00ff00" fill="none"/>
<line x1="392.5" y1="611" x2="392.5" y2="677" stroke="#00ff00"/>
<line x1="426.5" y1="611" x2="426.5" y2="677" stroke="#00ff00"/>
<line x1="429.5" y1="645.5" x2="429.5" y2="677" stroke="#00ff00"/>
<rect x="401.5" y="641.5" width="3.5" height="6.0" stroke="#00ff00" fill="none"/>
<line x1="405.5" y1="635" x2="405.5" y2="657.5" stroke="#00ff00"/>
<rect x="235.5" y="386.5" width="4.5" height="4.5" stroke="#00ff00" fill="none"/>
<path d="M235.5 391 L241.5 391" stroke="#00ff00" fill="none"/>
<rect x="250" y="386.5" width="4.5" height="4.5" stroke="#00ff00" fill="none"/>
<path d="M250 391 L255.5 391 L255.5 410 L254 445" stroke="#00ff00" fill="none"/>
<rect x="257" y="386.5" width="4.5" height="4.5" stroke="#00ff00" fill="none"/>
<path d="M257 391 L262.5 391 L262.5 410 L259 445" stroke="#00ff00" fill="none"/>
<rect x="264.5" y="386.5" width="4.5" height="4.5" stroke="#00ff00" fill="none"/>
<path d="M264.5 391 L270 391 L268.5 402 L267 440" stroke="#00ff00" fill="none"/>
<rect x="286.5" y="386.5" width="4.5" height="4.5" stroke="#00ff00" fill="none"/>
<path d="M286.5 391 L292 391 L292 405 L294 430 L293 444" stroke="#00ff00" fill="none"/>
<rect x="293.5" y="386.5" width="4.5" height="4.5" stroke="#00ff00" fill="none"/>
<path d="M293.5 391 L299.5 391 L299.5 411 L298 478" stroke="#00ff00" fill="none"/>
<rect x="308.5" y="386.5" width="4.5" height="4.5" stroke="#00ff00" fill="none"/>
<path d="M313.5 391 L308.5 391 L308.5 430 L307.5 460" stroke="#00ff00" fill="none"/>
<rect x="329.5" y="386.5" width="4.5" height="4.5" stroke="#00ff00" fill="none"/>
<path d="M329.5 391 L335.5 391 L335.5 425 L337 480" stroke="#00ff00" fill="none"/>
<rect x="388.5" y="386.5" width="4.5" height="4.5" stroke="#00ff00" fill="none"/>
<path d="M393.5 391 L388.5 391 L388.5 467" stroke="#00ff00" fill="none"/>
<rect x="410.5" y="386.5" width="4.5" height="4.5" stroke="#00ff00" fill="none"/>
<path d="M416 391 L410.5 391 L410.5 416 L411.5 444" stroke="#00ff00" fill="none"/>
<rect x="224.5" y="677.5" width="5.0" height="5.0" stroke="#00ff00" fill="none"/>
<path d="M226.5 621 L226.5 651 L225 665 L225 682.5 L230 682.5" stroke="#00ff00" fill="none"/>
<rect x="232.5" y="677.5" width="5.0" height="5.0" stroke="#00ff00" fill="none"/>
<path d="M236.5 608 L236.5 640 L237.5 655 L237.5 682.5 L232.5 682.5" stroke="#00ff00" fill="none"/>
<rect x="254" y="677.5" width="5" height="5.0" stroke="#00ff00" fill="none"/>
<path d="M255.5 612 L255.5 645 L254.5 660 L254.5 682.5 L259.5 682.5" stroke="#00ff00" fill="none"/>
<rect x="261.5" y="677.5" width="5.0" height="5.0" stroke="#00ff00" fill="none"/>
<path d="M263 583 L263 657 L262 668 L262 682.5 L267 682.5" stroke="#00ff00" fill="none"/>
<rect x="269" y="677.5" width="5" height="5.0" stroke="#00ff00" fill="none"/>
<path d="M268.5 625 L268.5 682.5 L274 682.5" stroke="#00ff00" fill="none"/>
<rect x="290.5" y="677.5" width="5.0" height="5.0" stroke="#00ff00" fill="none"/>
<path d="M292 621 L292 667 L290.5 675 L290.5 682.5 L296 682.5" stroke="#00ff00" fill="none"/>
<rect x="326.5" y="677.5" width="5.0" height="5.0" stroke="#00ff00" fill="none"/>
<path d="M329 600 L329 661 L327.5 670 L327.5 682.5 L332.5 682.5" stroke="#00ff00" fill="none"/>
<rect x="370.5" y="677.5" width="5.0" height="5.0" stroke="#00ff00" fill="none"/>
<path d="M375.5 621 L375.5 651 L377 660 L377 682.5 L370.5 682.5" stroke="#00ff00" fill="none"/>
<rect x="378" y="677.5" width="5" height="5.0" stroke="#00ff00" fill="none"/>
<path d="M378 682.5 L383 682.5" stroke="#00ff00" fill="none"/>
<rect x="392.5" y="677.5" width="5.0" height="5.0" stroke="#00ff00" fill="none"/>
<path d="M392.5 682.5 L398 682.5" stroke="#00ff00" fill="none"/>
<rect x="421.5" y="677.5" width="5.0" height="5.0" stroke="#00ff00" fill="none"/>
<path d="M421.5 682.5 L427 682.5" stroke="#00ff00" fill="none"/>
<rect x="429" y="677.5" width="5" height="5.0" stroke="#00ff00" fill="none"/>
<path d="M429 682.5 L434 682.5" stroke="#00ff00" fill="none"/>
<rect x="133.5" y="499.5" width="4.5" height="4.5" stroke="#00ff00" fill="none"/>
<path d="M133.5 504 L141.5 504 L170 499.5" stroke="#00ff00" fill="none"/>
<rect x="133.5" y="572.5" width="4.5" height="4.5" stroke="#00ff00" fill="none"/>
<path d="M133.5 577 L141.5 577 L164 573" stroke="#00ff00" fill="none"/>
<rect x="133.5" y="587.5" width="4.5" height="4.0" stroke="#00ff00" fill="none"/>
<path d="M133.5 591.5 L141.5 591.5 L157.5 583.5" stroke="#00ff00" fill="none"/>
<rect x="539.5" y="504.5" width="6.0" height="4.5" stroke="#00ff00" fill="none"/>
<path d="M477 507 L525 509 L545.5 509" stroke="#00ff00" fill="none"/>
</g>
<g id="part_tables">
<line x1="945.5" y1="431.5" x2="1116.5" y2="431.5" stroke="#000000"/>
<line x1="945.5" y1="441.5" x2="1116.5" y2="441.5" stroke="#000000"/>
<line x1="945.5" y1="450.5" x2="1116.5" y2="450.5" stroke="#000000"/>
<line x1="945.5" y1="460.5" x2="1116.5" y2="460.5" stroke="#000000"/>
<line x1="945.5" y1="470.5" x2="1116.5" y2="470.5" stroke="#000000"/>
<line x1="945.5" y1="480.5" x2="1116.5" y2="480.5" stroke="#000000"/>
<line x1="945.5" y1="489.5" x2="1116.5" y2="489.5" stroke="#000000"/>
<line x1="945.5" y1="499.5" x2="1116.5" y2="499.5" stroke="#000000"/>
<line x1="945.5" y1="509.5" x2="1116.5" y2="509.5" stroke="#000000"/>
<line x1="945.5" y1="518.5" x2="1116.5" y2="518.5" stroke="#000000"/>
<line x1="945.5" y1="528.5" x2="1116.5" y2="528.5" stroke="#000000"/>
<line x1="945.5" y1="538.5" x2="1116.5" y2="538.5" stroke="#000000"/>
<line x1="945.5" y1="547.5" x2="1116.5" y2="547.5" stroke="#000000"/>
<line x1="945.5" y1="557.5" x2="1116.5" y2="557.5" stroke="#000000"/>
<line x1="945.5" y1="567.5" x2="1116.5" y2="567.5" stroke="#000000"/>
<line x1="945.5" y1="577.5" x2="1116.5" y2="577.5" stroke="#000000"/>
<line x1="945.5" y1="586.5" x2="1116.5" y2="586.5" stroke="#000000"/>
<line x1="945.5" y1="596.5" x2="1116.5" y2="596.5" stroke="#000000"/>
<line x1="945.5" y1="606.5" x2="1116.5" y2="606.5" stroke="#000000"/>
<line x1="945.5" y1="615.5" x2="1116.5" y2="615.5" stroke="#000000"/>
<line x1="945.5" y1="625.5" x2="1116.5" y2="625.5" stroke="#000000"/>
<line x1="945.5" y1="635.5" x2="1116.5" y2="635.5" stroke="#000000"/>
<line x1="945.5" y1="645.5" x2="1116.5" y2="645.5" stroke="#000000"/>
<line x1="945.5" y1="654.5" x2="1116.5" y2="654.5" stroke="#000000"/>
<line x1="945.5" y1="664.5" x2="1116.5" y2="664.5" stroke="#000000"/>
<line x1="945.5" y1="674.5" x2="1116.5" y2="674.5" stroke="#000000"/>
<line x1="945.5" y1="683.5" x2="1116.5" y2="683.5" stroke="#000000"/>
<line x1="945.5" y1="693.5" x2="1116.5" y2="693.5" stroke="#000000"/>
<line x1="945.5" y1="703.5" x2="1116.5" y2="703.5" stroke="#000000"/>
<line x1="945.5" y1="713.5" x2="1116.5" y2="713.5" stroke="#000000"/>
<line x1="945.5" y1="722.5" x2="1116.5" y2="722.5" stroke="#000000"/>
<line x1="945.5" y1="732.5" x2="1116.5" y2="732.5" stroke="#000000"/>
<line x1="945.5" y1="431" x2="945.5" y2="732.5" stroke="#000000"/>
<line x1="960.5" y1="431" x2="960.5" y2="732.5" stroke="#000000"/>
<line x1="990.5" y1="431" x2="990.5" y2="732.5" stroke="#000000"/>
<line x1="1023.5" y1="431" x2="1023.5" y2="732.5" stroke="#000000"/>
<line x1="1035.5" y1="431" x2="1035.5" y2="732.5" stroke="#000000"/>
<line x1="1068.5" y1="431" x2="1068.5" y2="732.5" stroke="#000000"/>
<line x1="1086.5" y1="431" x2="1086.5" y2="732.5" stroke="#000000"/>
<rect x="950.5" y="434.9" width="4.0" height="3.0" stroke="#000000" fill="none"/>
<rect x="967.2" y="434.9" width="18.6" height="3.0" stroke="#000000" fill="none"/>
<rect x="991.5" y="434.9" width="15.8" height="3.0" stroke="#000000" fill="none"/>
<rect x="1028" y="434.4" width="2" height="4" fill="#000"/>
<rect x="1047.0" y="434.9" width="12.4" height="3.0" stroke="#000000" fill="none"/>
<rect x="1075.0" y="434.9" width="4.9" height="3.0" stroke="#000000" fill="none"/>
<rect x="950.5" y="444.9" width="4.0" height="3.0" stroke="#000000" fill="none"/>
<rect x="967.2" y="444.9" width="19.3" height="3.0" stroke="#000000" fill="none"/>
<rect x="991.5" y="444.9" width="14.8" height="3.0" stroke="#000000" fill="none"/>
<rect x="1028" y="444.4" width="2" height="4" fill="#000"/>
<rect x="1047.0" y="444.9" width="12.4" height="3.0" stroke="#000000" fill="none"/>
<rect x="1075.0" y="444.9" width="4.9" height="3.0" stroke="#000000" fill="none"/>
<rect x="950.5" y="453.3" width="4.0" height="4.2" stroke="#000000" fill="none"/>
<rect x="964.2" y="453.3" width="26.5" height="4.2" stroke="#000000" fill="none"/>
<rect x="991.5" y="453.3" width="22.8" height="4.2" stroke="#000000" fill="none"/>
<line x1="993.4" y1="453.2535" x2="993.4" y2="457.4535" stroke="#000000"/>
<rect x="1028" y="453.3" width="2.8" height="4.2" stroke="#000000" fill="none"/>
<rect x="1046.0" y="453.3" width="14.6" height="4.2" stroke="#000000" fill="none"/>
<rect x="1074.5" y="453.3" width="7.2" height="4.2" stroke="#000000" fill="none"/>
<rect x="950.5" y="463.9" width="4.0" height="3.0" stroke="#000000" fill="none"/>
<rect x="964.2" y="463.9" width="26.5" height="3.0" stroke="#000000" fill="none"/>
<rect x="991.5" y="463.9" width="22.8" height="3.0" stroke="#000000" fill="none"/>
<line x1="993.4" y1="463.8535" x2="993.4" y2="466.8535" stroke="#000000"/>
<rect x="1028" y="463.9" width="2.8" height="3.0" stroke="#000000" fill="none"/>
<rect x="1046.0" y="463.9" width="14.6" height="3.0" stroke="#000000" fill="none"/>
<rect x="1074.5" y="463.9" width="6.2" height="3.0" stroke="#000000" fill="none"/>
<rect x="950.5" y="473.9" width="4.0" height="3.0" stroke="#000000" fill="none"/>
<rect x="964.2" y="473.9" width="26.5" height="3.0" stroke="#000000" fill="none"/>
<rect x="991.5" y="473.9" width="22.8" height="3.0" stroke="#000000" fill="none"/>
<line x1="993.4" y1="473.8535" x2="993.4" y2="476.8535" stroke="#000000"/>
<rect x="1028" y="473.9" width="2.8" height="3.0" stroke="#000000" fill="none"/>
<rect x="1046.0" y="473.9" width="14.6" height="3.0" stroke="#000000" fill="none"/>
<rect x="1074.5" y="473.9" width="7.2" height="3.0" stroke="#000000" fill="none"/>
<rect x="950.5" y="483.3" width="4.0" height="4.2" stroke="#000000" fill="none"/>
<rect x="967.2" y="483.3" width="18.6" height="4.2" stroke="#000000" fill="none"/>
<rect x="991.5" y="483.3" width="22.8" height="4.2" stroke="#000000" fill="none"/>
<rect x="1028" y="482.9" width="2" height="5" fill="#000"/>
<rect x="1050.2" y="483.3" width="4.2" height="4.2" stroke="#000000" fill="none"/>
<rect x="1076.2" y="483.3" width="2.0" height="4.2" stroke="#000000" fill="none"/>
<rect x="950.5" y="492.9" width="4.0" height="3.0" stroke="#000000" fill="none"/>
<rect x="967.2" y="492.9" width="19.3" height="3.0" stroke="#000000" fill="none"/>
<rect x="991.5" y="492.9" width="22.8" height="3.0" stroke="#000000" fill="none"/>
<rect x="1028" y="492.4" width="2" height="4" fill="#000"/>
<rect x="1050.2" y="492.9" width="4.2" height="3.0" stroke="#000000" fill="none"/>
<rect x="1076.2" y="492.9" width="2.0" height="3.0" stroke="#000000" fill="none"/>
<rect x="950.5" y="502.9" width="4.0" height="3.0" stroke="#000000" fill="none"/>
<rect x="967.2" y="502.9" width="18.6" height="3.0" stroke="#000000" fill="none"/>
<rect x="991.5" y="502.9" width="12.8" height="3.0" stroke="#000000" fill="none"/>
<rect x="1028" y="502.4" width="2" height="4" fill="#000"/>
<rect x="1050.2" y="502.9" width="4.2" height="3.0" stroke="#000000" fill="none"/>
<rect x="1076.2" y="502.9" width="2.0" height="3.0" stroke="#000000" fill="none"/>
<rect x="950.5" y="512.3" width="4.0" height="4.2" stroke="#000000" fill="none"/>
<rect x="967.2" y="512.3" width="18.6" height="4.2" stroke="#000000" fill="none"/>
<rect x="991.5" y="512.3" width="14.1" height="4.2" stroke="#000000" fill="none"/>
<rect x="1028" y="511.9" width="2" height="5" fill="#000"/>
<rect x="1050.2" y="512.3" width="4.2" height="4.2" stroke="#000000" fill="none"/>
<rect x="1076.2" y="512.3" width="2.0" height="4.2" stroke="#000000" fill="none"/>
<rect x="950.5" y="521.9" width="4.0" height="3.0" stroke="#000000" fill="none"/>
<rect x="967.2" y="521.9" width="18.6" height="3.0" stroke="#000000" fill="none"/>
<rect x="991.5" y="521.9" width="9.1" height="3.0" stroke="#000000" fill="none"/>
<rect x="1028" y="521.4" width="2" height="4" fill="#000"/>
<rect x="1044.0" y="521.9" width="18.6" height="3.0" stroke="#000000" fill="none"/>
<rect x="1072.0" y="521.9" width="12.9" height="3.0" stroke="#000000" fill="none"/>
<rect x="950.5" y="531.9" width="4.0" height="3.0" stroke="#000000" fill="none"/>
<rect x="967.2" y="531.9" width="18.6" height="3.0" stroke="#000000" fill="none"/>
<rect x="991.5" y="531.9" width="21.0" height="3.0" stroke="#000000" fill="none"/>
<rect x="1028" y="531.4" width="2" height="4" fill="#000"/>
<rect x="1044.0" y="531.9" width="18.6" height="3.0" stroke="#000000" fill="none"/>
<rect x="1074.5" y="531.9" width="6.2" height="3.0" stroke="#000000" fill="none"/>
<rect x="950.5" y="541.3" width="4.0" height="4.2" stroke="#000000" fill="none"/>
<rect x="967.2" y="541.3" width="18.6" height="4.2" stroke="#000000" fill="none"/>
<rect x="991.5" y="541.3" width="21.0" height="4.2" stroke="#000000" fill="none"/>
<rect x="1028" y="540.9" width="2" height="5" fill="#000"/>
<rect x="1042.3" y="541.3" width="24.5" height="4.2" stroke="#000000" fill="none"/>
<rect x="1076.2" y="541.3" width="2.0" height="4.2" stroke="#000000" fill="none"/>
<rect x="950.5" y="550.9" width="4.0" height="3.0" stroke="#000000" fill="none"/>
<rect x="967.2" y="550.9" width="18.6" height="3.0" stroke="#000000" fill="none"/>
<rect x="991.5" y="550.9" width="9.1" height="3.0" stroke="#000000" fill="none"/>
<rect x="1028" y="550.4" width="2" height="4" fill="#000"/>
<rect x="1044.0" y="550.9" width="19.3" height="3.0" stroke="#000000" fill="none"/>
<rect x="1076" y="550.6" width="2" height="3.5" fill="#000"/>
<rect x="950.5" y="560.9" width="4.0" height="3.0" stroke="#000000" fill="none"/>
<rect x="963.0" y="560.9" width="27.7" height="3.0" stroke="#000000" fill="none"/>
<rect x="991.5" y="560.9" width="15.8" height="3.0" stroke="#000000" fill="none"/>
<line x1="993.4" y1="560.8535" x2="993.4" y2="563.8535" stroke="#000000"/>
<rect x="1028" y="560.9" width="2.8" height="3.0" stroke="#000000" fill="none"/>
<rect x="1046.0" y="560.9" width="14.6" height="3.0" stroke="#000000" fill="none"/>
<rect x="1076" y="560.6" width="2" height="3.5" fill="#000"/>
<rect x="950.5" y="570.3" width="4.0" height="4.2" stroke="#000000" fill="none"/>
<rect x="967.2" y="570.3" width="18.6" height="4.2" stroke="#000000" fill="none"/>
<rect x="991.5" y="570.3" width="21.0" height="4.2" stroke="#000000" fill="none"/>
<rect x="1028" y="569.9" width="2" height="5" fill="#000"/>
<rect x="1044.5" y="570.3" width="18.1" height="4.2" stroke="#000000" fill="none"/>
<rect x="1074.5" y="570.3" width="7.2" height="4.2" stroke="#000000" fill="none"/>
<rect x="950.5" y="580.9" width="4.0" height="3.0" stroke="#000000" fill="none"/>
<rect x="967.2" y="580.9" width="18.6" height="3.0" stroke="#000000" fill="none"/>
<rect x="991.5" y="580.9" width="9.1" height="3.0" stroke="#000000" fill="none"/>
<rect x="1028" y="580.4" width="2" height="4" fill="#000"/>
<rect x="1044.5" y="580.9" width="19.3" height="3.0" stroke="#000000" fill="none"/>
<rect x="1075.0" y="580.9" width="4.9" height="3.0" stroke="#000000" fill="none"/>
<rect x="950.5" y="589.9" width="4.0" height="3.0" stroke="#000000" fill="none"/>
<rect x="967.2" y="589.9" width="19.3" height="3.0" stroke="#000000" fill="none"/>
<rect x="991.5" y="589.9" width="14.1" height="3.0" stroke="#000000" fill="none"/>
<rect x="1028" y="589.4" width="2" height="4" fill="#000"/>
<rect x="1047.0" y="589.9" width="12.4" height="3.0" stroke="#000000" fill="none"/>
<rect x="1075.0" y="589.9" width="5.7" height="3.0" stroke="#000000" fill="none"/>
<rect x="950.5" y="599.3" width="4.0" height="4.2" stroke="#000000" fill="none"/>
<rect x="962.2" y="599.3" width="28.5" height="4.2" stroke="#000000" fill="none"/>
<rect x="991.5" y="599.3" width="17.8" height="4.2" stroke="#000000" fill="none"/>
<line x1="993.4" y1="599.2535" x2="993.4" y2="603.4535000000001" stroke="#000000"/>
<rect x="1028" y="598.9" width="2" height="5" fill="#000"/>
<rect x="1049.5" y="599.3" width="6.9" height="4.2" stroke="#000000" fill="none"/>
<rect x="1076.2" y="599.3" width="2.5" height="4.2" stroke="#000000" fill="none"/>
<rect x="950.5" y="609.3" width="4.0" height="4.2" stroke="#000000" fill="none"/>
<rect x="962.2" y="609.3" width="28.5" height="4.2" stroke="#000000" fill="none"/>
<rect x="991.5" y="609.3" width="25.7" height="4.2" stroke="#000000" fill="none"/>
<line x1="993.4" y1="609.2535" x2="993.4" y2="613.4535000000001" stroke="#000000"/>
<rect x="1028" y="609.3" width="2.8" height="4.2" stroke="#000000" fill="none"/>
<rect x="1049.5" y="609.3" width="6.9" height="4.2" stroke="#000000" fill="none"/>
<rect x="1075.0" y="609.3" width="4.9" height="4.2" stroke="#000000" fill="none"/>
<rect x="950.5" y="618.3" width="4.0" height="4.2" stroke="#000000" fill="none"/>
<rect x="961.0" y="618.3" width="29.7" height="4.2" stroke="#000000" fill="none"/>
<rect x="991.5" y="618.3" width="9.1" height="4.2" stroke="#000000" fill="none"/>
<line x1="993.4" y1="618.2535" x2="993.4" y2="622.4535000000001" stroke="#000000"/>
<rect x="1028" y="617.9" width="2" height="5" fill="#000"/>
<rect x="1047.0" y="618.3" width="12.4" height="4.2" stroke="#000000" fill="none"/>
<rect x="1075.0" y="618.3" width="4.9" height="4.2" stroke="#000000" fill="none"/>
<rect x="950.5" y="628.9" width="3.0" height="3.0" stroke="#000000" fill="none"/>
<rect x="967.2" y="628.9" width="18.6" height="3.0" stroke="#000000" fill="none"/>
<rect x="991.5" y="628.9" width="19.0" height="3.0" stroke="#000000" fill="none"/>
<rect x="1028" y="628.4" width="2" height="4" fill="#000"/>
<rect x="1045.2" y="628.9" width="16.2" height="3.0" stroke="#000000" fill="none"/>
<rect x="1075.0" y="628.9" width="4.9" height="3.0" stroke="#000000" fill="none"/>
<rect x="950.5" y="638.9" width="3.0" height="3.0" stroke="#000000" fill="none"/>
<rect x="962.2" y="638.9" width="28.5" height="3.0" stroke="#000000" fill="none"/>
<rect x="991.5" y="638.9" width="22.8" height="3.0" stroke="#000000" fill="none"/>
<line x1="993.4" y1="638.8535" x2="993.4" y2="641.8535" stroke="#000000"/>
<rect x="1028" y="638.9" width="2.8" height="3.0" stroke="#000000" fill="none"/>
<rect x="1049.5" y="638.9" width="6.9" height="3.0" stroke="#000000" fill="none"/>
<rect x="1076.2" y="638.9" width="2.5" height="3.0" stroke="#000000" fill="none"/>
<rect x="950.5" y="648.9" width="3.0" height="3.0" stroke="#000000" fill="none"/>
<rect x="962.2" y="648.9" width="28.5" height="3.0" stroke="#000000" fill="none"/>
<rect x="991.5" y="648.9" width="15.8" height="3.0" stroke="#000000" fill="none"/>
<line x1="993.4" y1="648.8535" x2="993.4" y2="651.8535" stroke="#000000"/>
<rect x="1028" y="648.9" width="2.8" height="3.0" stroke="#000000" fill="none"/>
<rect x="1049.5" y="648.9" width="6.9" height="3.0" stroke="#000000" fill="none"/>
<rect x="1076.2" y="648.9" width="2.5" height="3.0" stroke="#000000" fill="none"/>
<rect x="950.5" y="657.3" width="3.0" height="4.2" stroke="#000000" fill="none"/>
<rect x="964.2" y="657.3" width="26.5" height="4.2" stroke="#000000" fill="none"/>
<rect x="991.5" y="657.3" width="25.2" height="4.2" stroke="#000000" fill="none"/>
<line x1="993.4" y1="657.2535" x2="993.4" y2="661.4535000000001" stroke="#000000"/>
<rect x="1028" y="657.3" width="2.8" height="4.2" stroke="#000000" fill="none"/>
<rect x="1046.5" y="657.3" width="13.6" height="4.2" stroke="#000000" fill="none"/>
<rect x="1076.2" y="657.3" width="2.5" height="4.2" stroke="#000000" fill="none"/>
<rect x="950.5" y="667.9" width="3.0" height="3.0" stroke="#000000" fill="none"/>
<rect x="967.2" y="667.9" width="18.6" height="3.0" stroke="#000000" fill="none"/>
<rect x="991.5" y="667.9" width="14.1" height="3.0" stroke="#000000" fill="none"/>
<rect x="1028" y="667.4" width="2" height="4" fill="#000"/>
<rect x="1050.2" y="667.9" width="4.2" height="3.0" stroke="#000000" fill="none"/>
<rect x="1076.2" y="667.9" width="2.5" height="3.0" stroke="#000000" fill="none"/>
<rect x="950.5" y="677.9" width="3.0" height="3.0" stroke="#000000" fill="none"/>
<rect x="962.2" y="677.9" width="28.5" height="3.0" stroke="#000000" fill="none"/>
<rect x="991.5" y="677.9" width="25.2" height="3.0" stroke="#000000" fill="none"/>
<line x1="993.4" y1="677.8535" x2="993.4" y2="680.8535" stroke="#000000"/>
<rect x="1028" y="677.9" width="2.8" height="3.0" stroke="#000000" fill="none"/>
<rect x="1049.5" y="677.9" width="6.9" height="3.0" stroke="#000000" fill="none"/>
<rect x="1076.2" y="677.9" width="2.5" height="3.0" stroke="#000000" fill="none"/>
<rect x="950.5" y="686.9" width="3.0" height="3.0" stroke="#000000" fill="none"/>
<rect x="962.2" y="686.9" width="28.5" height="3.0" stroke="#000000" fill="none"/>
<rect x="991.5" y="686.9" width="17.8" height="3.0" stroke="#000000" fill="none"/>
<line x1="993.4" y1="686.8535" x2="993.4" y2="689.8535" stroke="#000000"/>
<rect x="1027" y="686.9" width="5.5" height="3.0" stroke="#000000" fill="none"/>
<rect x="1049.5" y="686.9" width="6.9" height="3.0" stroke="#000000" fill="none"/>
<rect x="1076.2" y="686.9" width="2.5" height="3.0" stroke="#000000" fill="none"/>
<rect x="950.5" y="696.3" width="3.0" height="4.2" stroke="#000000" fill="none"/>
<rect x="967.2" y="696.3" width="18.6" height="4.2" stroke="#000000" fill="none"/>
<rect x="991.5" y="696.3" width="14.1" height="4.2" stroke="#000000" fill="none"/>
<rect x="1028" y="695.9" width="2" height="5" fill="#000"/>
<rect x="1047.0" y="696.3" width="12.4" height="4.2" stroke="#000000" fill="none"/>
<rect x="1076.2" y="696.3" width="2.5" height="4.2" stroke="#000000" fill="none"/>
<rect x="950.5" y="706.9" width="3.0" height="3.0" stroke="#000000" fill="none"/>
<rect x="967.2" y="706.9" width="18.6" height="3.0" stroke="#000000" fill="none"/>
<rect x="991.5" y="706.9" width="21.0" height="3.0" stroke="#000000" fill="none"/>
<rect x="1028" y="706.4" width="2" height="4" fill="#000"/>
<rect x="1044.5" y="706.9" width="18.1" height="3.0" stroke="#000000" fill="none"/>
<rect x="1074.5" y="706.9" width="7.2" height="3.0" stroke="#000000" fill="none"/>
<rect x="952" y="716.6" width="2" height="3.5" fill="#000"/>
<rect x="962.2" y="716.9" width="28.5" height="3.0" stroke="#000000" fill="none"/>
<rect x="991.5" y="716.9" width="22.8" height="3.0" stroke="#000000" fill="none"/>
<line x1="993.4" y1="716.8535" x2="993.4" y2="719.8535" stroke="#000000"/>
<rect x="1028" y="716.9" width="2.8" height="3.0" stroke="#000000" fill="none"/>
<rect x="1049.5" y="716.9" width="6.9" height="3.0" stroke="#000000" fill="none"/>
<rect x="1076" y="716.6" width="2" height="3.5" fill="#000"/>
<rect x="946.1" y="725.4" width="13.6" height="4.6" stroke="#000000" fill="none"/>
<rect x="970.9" y="725.4" width="8.7" height="4.6" stroke="#000000" fill="none"/>
<rect x="1003.1" y="725.4" width="9.4" height="4.6" stroke="#000000" fill="none"/>
<rect x="1025.4" y="725.4" width="9.2" height="4.6" stroke="#000000" fill="none"/>
<rect x="1048.2" y="725.4" width="9.4" height="4.6" stroke="#000000" fill="none"/>
<rect x="1073.2" y="725.4" width="9.2" height="4.6" stroke="#000000" fill="none"/>
<rect x="1097.3" y="725.4" width="9.2" height="4.6" stroke="#000000" fill="none"/>
<line x1="775.5" y1="650.5" x2="945.5" y2="650.5" stroke="#000000"/>
<line x1="775.5" y1="660.5" x2="945.5" y2="660.5" stroke="#000000"/>
<line x1="775.5" y1="670.5" x2="945.5" y2="670.5" stroke="#000000"/>
<line x1="775.5" y1="679.5" x2="945.5" y2="679.5" stroke="#000000"/>
<line x1="775.5" y1="689.5" x2="945.5" y2="689.5" stroke="#000000"/>
<line x1="775.5" y1="699.5" x2="945.5" y2="699.5" stroke="#000000"/>
<line x1="775.5" y1="708.5" x2="945.5" y2="708.5" stroke="#000000"/>
<line x1="775.5" y1="718.5" x2="945.5" y2="718.5" stroke="#000000"/>
<line x1="775.5" y1="728.5" x2="945.5" y2="728.5" stroke="#000000"/>
<line x1="775.5" y1="737.5" x2="945.5" y2="737.5" stroke="#000000"/>
<line x1="775.5" y1="747.5" x2="945.5" y2="747.5" stroke="#000000"/>
<line x1="775.5" y1="756.5" x2="945.5" y2="756.5" stroke="#000000"/>
<line x1="775.5" y1="766.5" x2="945.5" y2="766.5" stroke="#000000"/>
<line x1="775.5" y1="776.5" x2="945.5" y2="776.5" stroke="#000000"/>
<line x1="775.5" y1="650.5" x2="775.5" y2="785.5" stroke="#000000"/>
<line x1="788.5" y1="650.5" x2="788.5" y2="785.5" stroke="#000000"/>
<line x1="820.5" y1="650.5" x2="820.5" y2="785.5" stroke="#000000"/>
<line x1="852.5" y1="650.5" x2="852.5" y2="785.5" stroke="#000000"/>
<line x1="865.5" y1="650.5" x2="865.5" y2="785.5" stroke="#000000"/>
<line x1="898.5" y1="650.5" x2="898.5" y2="785.5" stroke="#000000"/>
<line x1="916.5" y1="650.5" x2="916.5" y2="785.5" stroke="#000000"/>
<line x1="945.5" y1="650.5" x2="945.5" y2="785.5" stroke="#000000"/>
<rect x="780.8" y="653.8" width="4.0" height="3.0" stroke="#000000" fill="none"/>
<rect x="796.3" y="653.8" width="19.6" height="3.0" stroke="#000000" fill="none"/>
<rect x="821.4" y="653.8" width="20.3" height="3.0" stroke="#000000" fill="none"/>
<rect x="859" y="653.3" width="2" height="4" fill="#000"/>
<rect x="872.4" y="653.8" width="23.4" height="3.0" stroke="#000000" fill="none"/>
<rect x="906" y="653.6" width="2" height="3.5" fill="#000"/>
<rect x="780.8" y="663.8" width="4.0" height="3.0" stroke="#000000" fill="none"/>
<rect x="796.3" y="663.8" width="19.6" height="3.0" stroke="#000000" fill="none"/>
<rect x="821.4" y="663.8" width="13.3" height="3.0" stroke="#000000" fill="none"/>
<rect x="859" y="663.3" width="2" height="4" fill="#000"/>
<rect x="874.4" y="663.8" width="18.0" height="3.0" stroke="#000000" fill="none"/>
<rect x="905.7" y="663.8" width="4.0" height="3.0" stroke="#000000" fill="none"/>
<rect x="780.8" y="673.2" width="3.0" height="4.2" stroke="#000000" fill="none"/>
<rect x="796.3" y="673.2" width="19.6" height="4.2" stroke="#000000" fill="none"/>
<rect x="821.4" y="673.2" width="21.3" height="4.2" stroke="#000000" fill="none"/>
<rect x="859" y="672.8" width="2" height="5" fill="#000"/>
<rect x="874.4" y="673.2" width="18.0" height="4.2" stroke="#000000" fill="none"/>
<rect x="904.3" y="673.2" width="7.3" height="4.2" stroke="#000000" fill="none"/>
<rect x="780.8" y="682.8" width="4.0" height="3.0" stroke="#000000" fill="none"/>
<rect x="796.3" y="682.8" width="19.6" height="3.0" stroke="#000000" fill="none"/>
<rect x="821.4" y="682.8" width="20.3" height="3.0" stroke="#000000" fill="none"/>
<rect x="859" y="682.3" width="2" height="4" fill="#000"/>
<rect x="874.4" y="682.8" width="18.0" height="3.0" stroke="#000000" fill="none"/>
<rect x="904.3" y="682.8" width="7.3" height="3.0" stroke="#000000" fill="none"/>
<rect x="780.8" y="692.8" width="4.0" height="3.0" stroke="#000000" fill="none"/>
<rect x="796.3" y="692.8" width="19.6" height="3.0" stroke="#000000" fill="none"/>
<rect x="821.4" y="692.8" width="20.3" height="3.0" stroke="#000000" fill="none"/>
<rect x="859" y="692.3" width="2" height="4" fill="#000"/>
<rect x="874.4" y="692.8" width="18.0" height="3.0" stroke="#000000" fill="none"/>
<rect x="904.3" y="692.8" width="7.3" height="3.0" stroke="#000000" fill="none"/>
<rect x="780.8" y="702.2" width="3.0" height="4.2" stroke="#000000" fill="none"/>
<rect x="796.3" y="702.2" width="19.6" height="4.2" stroke="#000000" fill="none"/>
<rect x="821.4" y="702.2" width="21.3" height="4.2" stroke="#000000" fill="none"/>
<rect x="858.1" y="702.2" width="2.6" height="4.2" stroke="#000000" fill="none"/>
<rect x="874.4" y="702.2" width="19.4" height="4.2" stroke="#000000" fill="none"/>
<rect x="905.7" y="702.2" width="4.0" height="4.2" stroke="#000000" fill="none"/>
<rect x="780.8" y="711.8" width="4.0" height="3.0" stroke="#000000" fill="none"/>
<rect x="796.3" y="711.8" width="19.6" height="3.0" stroke="#000000" fill="none"/>
<rect x="821.4" y="711.8" width="20.3" height="3.0" stroke="#000000" fill="none"/>
<rect x="858.1" y="711.8" width="2.6" height="3.0" stroke="#000000" fill="none"/>
<rect x="874.4" y="711.8" width="19.4" height="3.0" stroke="#000000" fill="none"/>
<rect x="906.3" y="711.8" width="2.4" height="3.0" stroke="#000000" fill="none"/>
<rect x="780.8" y="721.8" width="4.0" height="3.0" stroke="#000000" fill="none"/>
<rect x="796.3" y="721.8" width="19.6" height="3.0" stroke="#000000" fill="none"/>
<rect x="821.4" y="721.8" width="20.3" height="3.0" stroke="#000000" fill="none"/>
<rect x="858.1" y="721.8" width="2.6" height="3.0" stroke="#000000" fill="none"/>
<rect x="874.4" y="721.8" width="19.4" height="3.0" stroke="#000000" fill="none"/>
<rect x="906.3" y="721.8" width="2.4" height="3.0" stroke="#000000" fill="none"/>
<rect x="780.8" y="731.2" width="3.0" height="4.2" stroke="#000000" fill="none"/>
<rect x="796.3" y="731.2" width="19.6" height="4.2" stroke="#000000" fill="none"/>
<rect x="821.4" y="731.2" width="9.0" height="4.2" stroke="#000000" fill="none"/>
<rect x="859" y="730.8" width="2" height="5" fill="#000"/>
<rect x="874.4" y="731.2" width="18.0" height="4.2" stroke="#000000" fill="none"/>
<rect x="903.3" y="731.2" width="9.3" height="4.2" stroke="#000000" fill="none"/>
<rect x="780.8" y="740.8" width="4.0" height="3.0" stroke="#000000" fill="none"/>
<rect x="796.3" y="740.8" width="18.2" height="3.0" stroke="#000000" fill="none"/>
<rect x="821.4" y="740.8" width="16.3" height="3.0" stroke="#000000" fill="none"/>
<rect x="859" y="740.3" width="2" height="4" fill="#000"/>
<rect x="877.5" y="740.8" width="10.9" height="3.0" stroke="#000000" fill="none"/>
<rect x="905.7" y="740.8" width="4.9" height="3.0" stroke="#000000" fill="none"/>
<rect x="780.8" y="750.8" width="4.0" height="3.0" stroke="#000000" fill="none"/>
<rect x="796.3" y="750.8" width="19.6" height="3.0" stroke="#000000" fill="none"/>
<rect x="821.4" y="750.8" width="16.3" height="3.0" stroke="#000000" fill="none"/>
<rect x="859" y="750.3" width="2" height="4" fill="#000"/>
<rect x="877.5" y="750.8" width="10.9" height="3.0" stroke="#000000" fill="none"/>
<rect x="905.7" y="750.8" width="4.0" height="3.0" stroke="#000000" fill="none"/>
<rect x="780.8" y="759.2" width="3.0" height="4.2" stroke="#000000" fill="none"/>
<rect x="796.3" y="759.2" width="19.6" height="4.2" stroke="#000000" fill="none"/>
<rect x="821.4" y="759.2" width="16.3" height="4.2" stroke="#000000" fill="none"/>
<rect x="859" y="758.8" width="2" height="5" fill="#000"/>
<rect x="877.5" y="759.2" width="10.9" height="4.2" stroke="#000000" fill="none"/>
<rect x="905.7" y="759.2" width="4.9" height="4.2" stroke="#000000" fill="none"/>
<rect x="780.8" y="769.8" width="4.0" height="3.0" stroke="#000000" fill="none"/>
<rect x="796.3" y="769.8" width="19.6" height="3.0" stroke="#000000" fill="none"/>
<rect x="821.4" y="769.8" width="16.3" height="3.0" stroke="#000000" fill="none"/>
<rect x="859" y="769.3" width="2" height="4" fill="#000"/>
<rect x="877.5" y="769.8" width="10.9" height="3.0" stroke="#000000" fill="none"/>
<rect x="905.7" y="769.8" width="4.9" height="3.0" stroke="#000000" fill="none"/>
<rect x="776.3" y="778.6" width="13.8" height="4.8" stroke="#000000" fill="none"/>
<rect x="800.6" y="778.6" width="9.0" height="4.8" stroke="#000000" fill="none"/>
<rect x="832.3" y="778.6" width="9.0" height="4.8" stroke="#000000" fill="none"/>
<rect x="855.5" y="778.6" width="9.2" height="4.8" stroke="#000000" fill="none"/>
<rect x="878.5" y="778.6" width="9.0" height="4.8" stroke="#000000" fill="none"/>
<rect x="903.3" y="778.6" width="9.3" height="4.8" stroke="#000000" fill="none"/>
<rect x="927.5" y="778.6" width="8.9" height="4.8" stroke="#000000" fill="none"/>
<line x1="945.5" y1="739.5" x2="1021.5" y2="739.5" stroke="#000000"/>
<line x1="945.5" y1="745.5" x2="1021.5" y2="745.5" stroke="#000000"/>
<line x1="945.5" y1="752.5" x2="1021.5" y2="752.5" stroke="#000000"/>
<line x1="945.5" y1="759.5" x2="1021.5" y2="759.5" stroke="#000000"/>
<line x1="945.5" y1="765.5" x2="1021.5" y2="765.5" stroke="#000000"/>
<line x1="945.5" y1="772.5" x2="1021.5" y2="772.5" stroke="#000000"/>
<line x1="945.5" y1="778.5" x2="1021.5" y2="778.5" stroke="#000000"/>
<line x1="955.5" y1="732.5" x2="955.5" y2="759.5" stroke="#000000"/>
<line x1="964.5" y1="732.5" x2="964.5" y2="759.5" stroke="#000000"/>
<line x1="980.5" y1="732.5" x2="980.5" y2="759.5" stroke="#000000"/>
<line x1="995.5" y1="732.5" x2="995.5" y2="759.5" stroke="#000000"/>
<line x1="1007.5" y1="732.5" x2="1007.5" y2="759.5" stroke="#000000"/>
<line x1="958.5" y1="759.5" x2="958.5" y2="785.5" stroke="#000000"/>
<line x1="969.5" y1="759.5" x2="969.5" y2="785.5" stroke="#000000"/>
<line x1="984.5" y1="759.5" x2="984.5" y2="785.5" stroke="#000000"/>
<line x1="996.5" y1="759.5" x2="996.5" y2="785.5" stroke="#000000"/>
<line x1="1007.5" y1="759.5" x2="1007.5" y2="785.5" stroke="#000000"/>
<line x1="1021.5" y1="732.5" x2="1021.5" y2="785.5" stroke="#000000"/>
<line x1="1068.5" y1="732.5" x2="1068.5" y2="785.5" stroke="#000000"/>
<line x1="1021.5" y1="749.5" x2="1116.5" y2="749.5" stroke="#000000"/>
<line x1="1021.5" y1="759.5" x2="1068.5" y2="759.5" stroke="#000000"/>
<line x1="1021.5" y1="768.5" x2="1116.5" y2="768.5" stroke="#000000"/>
<line x1="1021.5" y1="777.5" x2="1116.5" y2="777.5" stroke="#000000"/>
<line x1="1046.5" y1="749.5" x2="1046.5" y2="768.5" stroke="#000000"/>
<line x1="1057.5" y1="749.5" x2="1057.5" y2="768.5" stroke="#000000"/>
<line x1="1033.5" y1="759.5" x2="1033.5" y2="768.5" stroke="#000000"/>
<line x1="1039.5" y1="759.5" x2="1039.5" y2="768.5" stroke="#000000"/>
<line x1="1046.5" y1="777.5" x2="1046.5" y2="785.5" stroke="#000000"/>
<rect x="947.5" y="753.5" width="6.1" height="2.7" stroke="#000000" fill="none"/>
<rect x="956.4" y="753.5" width="6.0" height="2.7" stroke="#000000" fill="none"/>
<rect x="969.5" y="753.5" width="4.9" height="2.7" stroke="#000000" fill="none"/>
<rect x="982.9" y="753.5" width="7.4" height="2.7" stroke="#000000" fill="none"/>
<rect x="998.8" y="753.5" width="4.8" height="2.7" stroke="#000000" fill="none"/>
<rect x="1009.7" y="753.5" width="8.0" height="2.7" stroke="#000000" fill="none"/>
<rect x="948.3" y="760.2" width="6.3" height="1.8" stroke="#000000" fill="none"/>
<rect x="948.3" y="766.8" width="6.3" height="2.6" stroke="#000000" fill="none"/>
<rect x="986.4" y="767.6" width="5.3" height="1.8" stroke="#000000" fill="none"/>
<rect x="948.3" y="773.3" width="6.3" height="1.8" stroke="#000000" fill="none"/>
<rect x="986.4" y="773.8" width="5.3" height="2.3" stroke="#000000" fill="none"/>
<rect x="986.4" y="780.4" width="5.3" height="2.8" stroke="#000000" fill="none"/>
<rect x="1041.5" y="738.5" width="8.3" height="1.8" stroke="#000000" fill="none"/>
<rect x="1027.4" y="752.6" width="11.1" height="2.7" stroke="#000000" fill="none"/>
<rect x="1049.5" y="752.6" width="4.9" height="2.7" stroke="#000000" fill="none"/>
<rect x="1060.4" y="752.6" width="5.3" height="2.7" stroke="#000000" fill="none"/>
<rect x="1024.2" y="761.5" width="6.2" height="3.0" stroke="#000000" fill="none"/>
<rect x="1059.6" y="761.5" width="7.0" height="1.7" stroke="#000000" fill="none"/>
<rect x="1078.3" y="756.5" width="26.3" height="3.2" stroke="#000000" fill="none"/>
<rect x="1087.5" y="769.0" width="10.9" height="3.1" stroke="#000000" fill="none"/>
<rect x="1088.4" y="779.1" width="2.1" height="3.6" stroke="#000000" fill="none"/>
</g>
</svg>
<div id="tabs">
<div class="tab act" style="left:0;width:62px"><span class="t" style="left:-9px">器.DWG</span><span class="x" style="left:47px">×</span></div>
<div class="tab" style="left:63px;width:120px"><span style="left:22px">输入轴.DWG</span><span class="x" style="left:106px">×</span></div>
<div class="tab" style="left:184px;width:148px"><span style="left:23px">二级大齿轮.DWG</span><span class="x" style="left:137px">×</span></div>
<div class="tab" style="left:333px;width:28px"><i style="left:10px;top:2px;width:12px;height:2px"></i><i style="left:15px;top:0;width:2px;height:7px"></i></div>
</div>
<div id="bot"><div class="ln0"></div><div class="ln"></div>
<svg width="80" height="14" viewBox="0 0 80 14" style="left:0;top:0"><path d="M5 14 L12 1 M7 10 L11 14 M62 14 L69 1" stroke="#777" stroke-width="1" fill="none"/></svg>
<div class="lay">Layout2</div></div>
</body></html>
